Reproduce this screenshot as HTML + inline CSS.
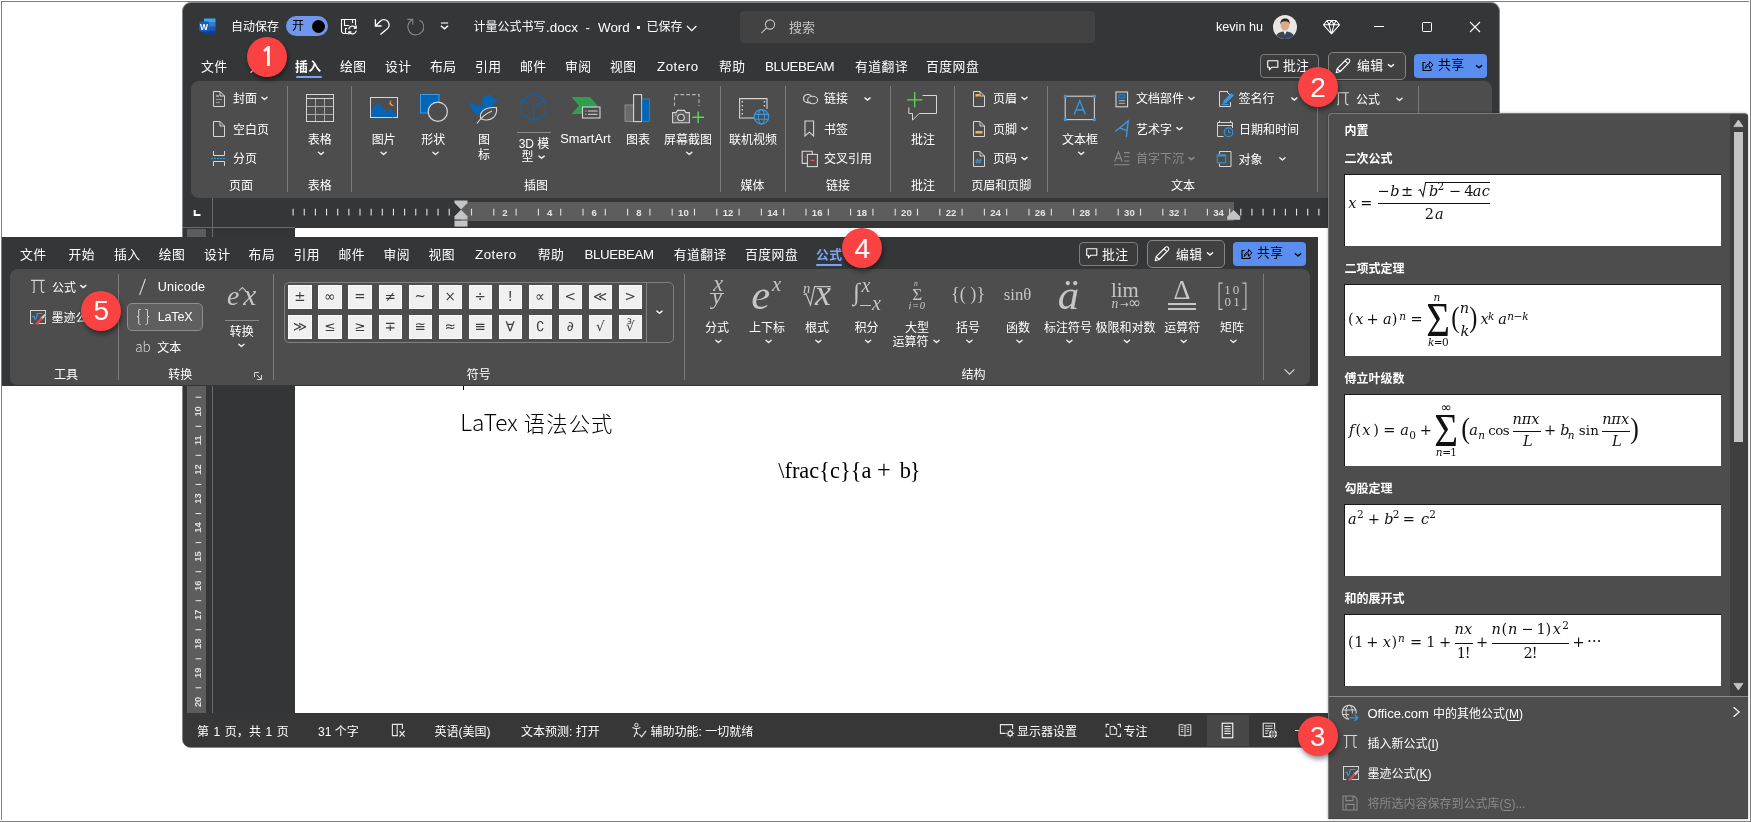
<!DOCTYPE html>
<html lang="zh-CN"><head><meta charset="utf-8"><title>Word 公式</title>
<style>
html,body{margin:0;padding:0;}
body{width:1751px;height:822px;overflow:hidden;background:#fff;position:relative;font-family:"Liberation Sans","Noto Sans CJK SC",sans-serif;font-size:12px;color:#fff;}
#root{position:absolute;left:0;top:0;width:1751px;height:822px;overflow:hidden;will-change:transform;}
#root div,#root span.t,#root svg.i{position:absolute;box-sizing:border-box;}
span.t{white-space:nowrap;}
span.c{text-align:center;}
.b{font-weight:bold;}
.m{font-family:"Liberation Serif","DejaVu Serif",serif;font-style:italic;color:#000;}
.mr{font-family:"Liberation Serif","DejaVu Serif",serif;font-style:normal;color:#000;}
.badge{border-radius:50%;background:#fb4242;box-shadow:1px 3px 5px rgba(0,0,0,.45);color:#fff;text-align:center;font-size:31px;line-height:40px;font-family:"Liberation Sans","Noto Sans CJK SC",sans-serif;}
</style></head><body><div id="root">
<div style="left:1px;top:1px;width:1748px;height:1px;background:#7f7f7f;"></div>
<div style="left:1px;top:1px;width:1px;height:819px;background:#7f7f7f;"></div>
<div style="left:1750px;top:0px;width:1px;height:822px;background:#7f7f7f;"></div>
<div style="left:0px;top:821px;width:1751px;height:1px;background:#7f7f7f;"></div>
<div style="left:182px;top:2px;width:1318px;height:746px;background:#353638;border:1px solid #858585;border-radius:9px;"></div>
<svg class="i" style="left:199px;top:18px;" width="17" height="17" viewBox="0 0 17 17">
<rect x="5" y="0.5" width="11.5" height="4.2" fill="#41a5ee"/>
<rect x="5" y="4.7" width="11.5" height="4.1" fill="#2b7cd3"/>
<rect x="5" y="8.8" width="11.5" height="4.1" fill="#185abd"/>
<rect x="5" y="12.9" width="11.5" height="3.6" fill="#103f91"/>
<rect x="0" y="3.6" width="10" height="10" rx="1" fill="#185abd"/>
<text x="5" y="11.6" font-family="Liberation Sans,sans-serif" font-size="8.5" font-weight="bold" fill="#fff" text-anchor="middle">W</text>
</svg>
<span class="t" style="left:231px;top:18.0px;font-size:12px;line-height:18px;color:#ffffff;">自动保存</span>
<div style="left:286px;top:16px;width:42px;height:20px;background:#6f97ee;border-radius:10px;"></div>
<span class="t" style="left:292px;top:17.0px;font-size:12px;line-height:18px;color:#000;">开</span>
<div style="left:311.5px;top:19.5px;width:13px;height:13px;background:#000;border-radius:50%;"></div>
<svg class="i" style="left:340px;top:18px;" width="18" height="18" viewBox="0 0 18 18">
<path d="M9 15.5 H3.2 L1.5 13.8 V1.5 H15.5 V8" fill="none" stroke="#fff" stroke-width="1.1" stroke-linejoin="miter"/>
<path d="M4.5 1.5 V7.5 H14.5 M12.5 1.5 V5" fill="none" stroke="#fff" stroke-width="1.1"/>
<path d="M5.5 15.5 V10.5 H8" fill="none" stroke="#fff" stroke-width="1.1"/><circle cx="12.5" cy="12" r="5.7" fill="#353638"/>
<path d="M8.6 11.3 A4 4 0 0 1 15.8 9.8 M16.2 7.6 V10.2 H13.6" fill="none" stroke="#fff" stroke-width="1.2"/>
<path d="M16.4 12.7 A4 4 0 0 1 9.2 14.2 M8.8 16.4 V13.8 H11.4" fill="none" stroke="#fff" stroke-width="1.2"/>
</svg>
<svg class="i" style="left:373px;top:17px;" width="18" height="19" viewBox="0 0 18 19">
<path d="M2.4 2.2 V9 H8.6" fill="none" stroke="#fff" stroke-width="1.3" stroke-linejoin="miter"/>
<path d="M2.6 8.8 L7.2 4.2 A5.2 5.2 0 0 1 14.6 11.6 L7.4 17.6" fill="none" stroke="#fff" stroke-width="1.3"/>
</svg>
<svg class="i" style="left:406px;top:17px;" width="18" height="19" viewBox="0 0 18 19">
<path d="M1.3 2.4 H6.8 V7.7" fill="none" stroke="#858585" stroke-width="1.1"/>
<path d="M6.4 2.8 A7.9 7.9 0 1 0 13.4 2.9" fill="none" stroke="#858585" stroke-width="1.1"/>
</svg>
<svg class="i" style="left:440px;top:20px;" width="10" height="12" viewBox="0 0 10 12"><path d="M0.9 3 H8.1" stroke="#fff" stroke-width="1.1"/><path d="M0.9 5.7 L4.5 8.8 L8.1 5.7" fill="none" stroke="#fff" stroke-width="1.5"/></svg>
<span class="t" style="left:473.5px;top:18.2px;font-size:12px;line-height:18px;color:#fff;">计量公式书写</span>
<span class="t" style="left:546px;top:17.5px;font-size:13.4px;line-height:19.4px;color:#fff;">.docx</span>
<span class="t" style="left:585.5px;top:17.5px;font-size:13.4px;line-height:19.4px;color:#fff;">-</span>
<span class="t" style="left:598px;top:17.5px;font-size:13.4px;line-height:19.4px;color:#fff;">Word</span>
<div style="left:637px;top:25.6px;width:3px;height:3px;background:#fff;"></div>
<span class="t" style="left:646.5px;top:18.2px;font-size:12px;line-height:18px;color:#fff;">已保存</span>
<svg class="i" style="left:685px;top:22.5px;" width="14" height="10" viewBox="0 0 14 10"><path d="M2 3 L6.7 7.7 L11.4 3" fill="none" stroke="#fff" stroke-width="1.2"/></svg>
<div style="left:740px;top:11px;width:355px;height:32px;background:#424242;border-radius:4px;"></div>
<svg class="i" style="left:760px;top:18px;" width="17" height="17" viewBox="0 0 17 17"><circle cx="10" cy="6.5" r="4.6" fill="none" stroke="#bdbdbd" stroke-width="1.2"/><path d="M6.7 9.8 L1.5 15" stroke="#bdbdbd" stroke-width="1.2"/></svg>
<span class="t" style="left:789px;top:17.5px;font-size:13px;line-height:19px;color:#c4c4c4;">搜索</span>
<span class="t" style="left:1216px;top:18.099999999999998px;font-size:12.6px;line-height:18.6px;color:#fff;">kevin hu</span>
<svg class="i" style="left:1273px;top:15px;" width="24" height="24" viewBox="0 0 24 24">
<circle cx="12" cy="12" r="12" fill="#e9e6e3"/>
<clipPath id="av"><circle cx="12" cy="12" r="12"/></clipPath>
<g clip-path="url(#av)">
<path d="M2 24 C3 17.5 8 16.5 12 16.5 C16 16.5 21 17.5 22 24 Z" fill="#3b4658"/>
<path d="M10 15 L12 20 L14 15 Z" fill="#f4f4f4"/>
<ellipse cx="12" cy="10.3" rx="4.3" ry="5.4" fill="#d9a98c"/>
<path d="M7.4 9.5 C7 4.5 10 3.2 12.2 3.4 C15 3.4 17.2 5 16.6 9.5 C16 7 14.5 6.2 12 6.4 C9.5 6.2 8 7 7.4 9.5 Z" fill="#2a2422"/>
</g></svg>
<svg class="i" style="left:1322px;top:17.5px;" width="19" height="18" viewBox="0 0 19 18"><path d="M5 2.5 H14 L17.5 6.8 L9.5 15.8 L1.5 6.8 Z M1.5 6.8 H17.5 M5 2.5 L7 6.8 L9.5 15.8 L12 6.8 L14 2.5 M9.5 2.5 L7 6.8 M9.5 2.5 L12 6.8" fill="none" stroke="#fff" stroke-width="1.05" stroke-linejoin="round"/></svg>
<svg class="i" style="left:1373px;top:20px;" width="12" height="12" viewBox="0 0 12 12"><path d="M1 6.5 H11" stroke="#fff" stroke-width="1"/></svg>
<svg class="i" style="left:1421px;top:21px;" width="12" height="12" viewBox="0 0 12 12"><rect x="1.5" y="1.5" width="9" height="9" rx="0.8" fill="none" stroke="#fff" stroke-width="1"/></svg>
<svg class="i" style="left:1469px;top:21px;" width="12" height="12" viewBox="0 0 12 12"><path d="M1 1 L11 11 M11 1 L1 11" stroke="#fff" stroke-width="1.1"/></svg>
<span class="t" style="left:201px;top:57.15px;font-size:12.8px;line-height:19.3px;color:#fff;letter-spacing:0.5px;">文件</span>
<span class="t" style="left:249.5px;top:57.15px;font-size:12.8px;line-height:19.3px;color:#fff;letter-spacing:0.5px;">开始</span>
<span class="t" style="left:295px;top:57.15px;font-size:12.8px;line-height:19.3px;color:#fff;font-weight:bold;letter-spacing:0.5px;">插入</span>
<span class="t" style="left:340px;top:57.15px;font-size:12.8px;line-height:19.3px;color:#fff;letter-spacing:0.5px;">绘图</span>
<span class="t" style="left:385px;top:57.15px;font-size:12.8px;line-height:19.3px;color:#fff;letter-spacing:0.5px;">设计</span>
<span class="t" style="left:430px;top:57.15px;font-size:12.8px;line-height:19.3px;color:#fff;letter-spacing:0.5px;">布局</span>
<span class="t" style="left:475px;top:57.15px;font-size:12.8px;line-height:19.3px;color:#fff;letter-spacing:0.5px;">引用</span>
<span class="t" style="left:520px;top:57.15px;font-size:12.8px;line-height:19.3px;color:#fff;letter-spacing:0.5px;">邮件</span>
<span class="t" style="left:565px;top:57.15px;font-size:12.8px;line-height:19.3px;color:#fff;letter-spacing:0.5px;">审阅</span>
<span class="t" style="left:610px;top:57.15px;font-size:12.8px;line-height:19.3px;color:#fff;letter-spacing:0.5px;">视图</span>
<span class="t" style="left:657px;top:57.15px;font-size:13.3px;line-height:19.3px;color:#fff;letter-spacing:0.55px;">Zotero</span>
<span class="t" style="left:719px;top:57.15px;font-size:12.8px;line-height:19.3px;color:#fff;letter-spacing:0.5px;">帮助</span>
<span class="t" style="left:765px;top:57.15px;font-size:13.3px;line-height:19.3px;color:#fff;letter-spacing:-0.42px;">BLUEBEAM</span>
<span class="t" style="left:855px;top:57.15px;font-size:12.8px;line-height:19.3px;color:#fff;letter-spacing:0.5px;">有道翻译</span>
<span class="t" style="left:926px;top:57.15px;font-size:12.8px;line-height:19.3px;color:#fff;letter-spacing:0.5px;">百度网盘</span>
<div style="left:295.5px;top:75.5px;width:26px;height:2px;background:#7aa3f5;border-radius:1px;"></div>
<div style="left:1259.5px;top:54px;width:59.5px;height:24px;background:#3b3b3b;border:1px solid #7d7d7d;border-radius:4px;"></div>
<svg class="i" style="left:1266px;top:59px;" width="14" height="13" viewBox="0 0 14 13"><path d="M1.7 1.7 H11.8 V8.3 H5.6 L3.4 10.8 V8.3 H1.7 Z" fill="none" stroke="#fff" stroke-width="1.1" stroke-linejoin="round"/></svg>
<span class="t" style="left:1283px;top:56.35px;font-size:12.8px;line-height:19.3px;color:#fff;letter-spacing:0.5px;">批注</span>
<div style="left:1327.5px;top:52px;width:78.5px;height:27.5px;background:#414141;border:1px solid #858585;border-radius:5px;"></div>
<svg class="i" style="left:1334px;top:57px;" width="18" height="18" viewBox="0 0 18 18"><path d="M2.2 15.8 L3.2 11.6 L12.3 2.5 A1.9 1.9 0 0 1 15.2 5.3 L6.2 14.5 Z M3.2 11.6 L6.2 14.5 M11 3.8 L14 6.7" fill="none" stroke="#fff" stroke-width="1.1" stroke-linejoin="round"/></svg>
<span class="t" style="left:1357px;top:56.35px;font-size:12.8px;line-height:19.3px;color:#fff;letter-spacing:0.5px;">编辑</span>
<svg class="i" style="left:1386px;top:62px;" width="11" height="9" viewBox="0 0 11 9"><path d="M2.4 2.6 L5 4.8100000000000005 L7.6 2.6" fill="none" stroke="#fff" stroke-width="1.4" stroke-linecap="round" stroke-linejoin="round" transform="translate(0.00 0.00)"/></svg>
<div style="left:1414px;top:54px;width:72.5px;height:24px;background:#5a8df0;border-radius:4px;"></div>
<svg class="i" style="left:1421px;top:59px;" width="13" height="13" viewBox="0 0 13 13"><path d="M4.5 3.5 H2 V11.5 H10 V9.5" fill="none" stroke="#000" stroke-width="1.1"/><path d="M4.2 9.5 C4.5 6.5 6.3 4.9 8.6 4.9 V2.4 L12 5.9 L8.6 9.2 V6.9 C6.8 6.9 5.3 7.7 4.2 9.5 Z" fill="none" stroke="#000" stroke-width="1" stroke-linejoin="round"/></svg>
<span class="t" style="left:1438px;top:55.15px;font-size:12.8px;line-height:19.3px;color:#000;letter-spacing:0.5px;">共享</span>
<svg class="i" style="left:1474px;top:63px;" width="11" height="9" viewBox="0 0 11 9"><path d="M2.4 2.6 L5 4.8100000000000005 L7.6 2.6" fill="none" stroke="#000" stroke-width="1.4" stroke-linecap="round" stroke-linejoin="round" transform="translate(0.00 0.00)"/></svg>
<div style="left:191px;top:81px;width:1300.5px;height:117px;background:#4d4d4d;border-radius:8px;"></div>
<div style="left:287px;top:86px;width:1px;height:106px;background:#7c7c7c;"></div>
<div style="left:351px;top:86px;width:1px;height:106px;background:#7c7c7c;"></div>
<div style="left:720px;top:86px;width:1px;height:106px;background:#7c7c7c;"></div>
<div style="left:785px;top:86px;width:1px;height:106px;background:#7c7c7c;"></div>
<div style="left:890px;top:86px;width:1px;height:106px;background:#7c7c7c;"></div>
<div style="left:954px;top:86px;width:1px;height:106px;background:#7c7c7c;"></div>
<div style="left:1047px;top:86px;width:1px;height:106px;background:#7c7c7c;"></div>
<div style="left:1317px;top:86px;width:1px;height:106px;background:#7c7c7c;"></div>
<div style="left:1418px;top:86px;width:1px;height:106px;background:#7c7c7c;"></div>
<svg class="i" style="left:212px;top:90px;" width="14" height="18" viewBox="0 0 14 18"><path d="M1.5 1.5 H8 L12.5 6 V16.5 H1.5 Z M8 1.5 V6 H12.5" fill="none" stroke="#d6d6d6" stroke-width="1" stroke-linejoin="miter"/><rect x="4" y="5" width="3" height="2" fill="#9a9a9a"/><path d="M4 9.5 H10 M4 12.5 H8" stroke="#9a9a9a" stroke-width="1"/></svg>
<span class="t" style="left:233px;top:90.2px;font-size:12px;line-height:18px;color:#fff;">封面</span>
<svg class="i" style="left:259px;top:94px;" width="11" height="9" viewBox="0 0 11 9"><path d="M2.4 2.6 L5 4.8100000000000005 L7.6 2.6" fill="none" stroke="#f0f0f0" stroke-width="1.4" stroke-linecap="round" stroke-linejoin="round" transform="translate(0.50 0.70)"/></svg>
<svg class="i" style="left:212px;top:120px;" width="14" height="18" viewBox="0 0 14 18"><path d="M1.5 1.5 H8 L12.5 6 V16.5 H1.5 Z M8 1.5 V6 H12.5" fill="none" stroke="#d6d6d6" stroke-width="1" stroke-linejoin="miter"/></svg>
<span class="t" style="left:233px;top:120.79999999999998px;font-size:12px;line-height:18px;color:#fff;">空白页</span>
<svg class="i" style="left:211px;top:150px;" width="16" height="17" viewBox="0 0 16 17"><path d="M2.5 1 V5.5 H13.5 V1 M2.5 16 V11.5 H13.5 V16" fill="none" stroke="#d6d6d6" stroke-width="1"/><path d="M0 8.5 H15.5" stroke="#3a96dd" stroke-width="1" stroke-dasharray="2 1"/></svg>
<span class="t" style="left:233px;top:150.39999999999998px;font-size:12px;line-height:18px;color:#fff;">分页</span>
<span class="t c" style="left:181.0px;top:177.39999999999998px;width:120px;font-size:12px;line-height:18px;color:#fff;">页面</span>
<svg class="i" style="left:305px;top:93px;" width="30" height="30" viewBox="0 0 30 30"><rect x="1.5" y="1.5" width="27" height="27" fill="none" stroke="#d6d6d6" stroke-width="1"/><path d="M1.5 5.5 H28.5" stroke="#d6d6d6" stroke-width="1"/><path d="M2 13.5 H28 M2 21.5 H28 M10.5 6 V28 M19.5 6 V28" stroke="#a8a8a8" stroke-width="1"/></svg>
<span class="t c" style="left:259.7px;top:130.79999999999998px;width:120px;font-size:12px;line-height:18px;color:#fff;">表格</span>
<svg class="i" style="left:316px;top:149px;" width="11" height="9" viewBox="0 0 11 9"><path d="M2.4 2.6 L5 4.8100000000000005 L7.6 2.6" fill="none" stroke="#f0f0f0" stroke-width="1.4" stroke-linecap="round" stroke-linejoin="round" transform="translate(0.00 0.60)"/></svg>
<span class="t c" style="left:259.7px;top:177.39999999999998px;width:120px;font-size:12px;line-height:18px;color:#fff;">表格</span>
<svg class="i" style="left:369px;top:96px;" width="30" height="23" viewBox="0 0 30 23"><rect x="1.5" y="1.5" width="27" height="20" fill="none" stroke="#d6d6d6" stroke-width="1"/><path d="M2 21 V14.5 L9 6.5 L18 16 L21.5 12.5 L28 19.5 V21 Z" fill="#0566b8"/><path d="M18 16 L23.5 21.4" stroke="#4d4d4d" stroke-width="1"/><path d="M23.2 4 A3 3 0 1 0 26 8.6 A2.6 2.6 0 0 1 23.2 4 Z" fill="#f2a33c"/></svg>
<span class="t c" style="left:323.7px;top:130.79999999999998px;width:120px;font-size:12px;line-height:18px;color:#fff;">图片</span>
<svg class="i" style="left:378px;top:149px;" width="11" height="9" viewBox="0 0 11 9"><path d="M2.4 2.6 L5 4.8100000000000005 L7.6 2.6" fill="none" stroke="#f0f0f0" stroke-width="1.4" stroke-linecap="round" stroke-linejoin="round" transform="translate(0.60 0.60)"/></svg>
<svg class="i" style="left:419px;top:93px;" width="32" height="30" viewBox="0 0 32 30"><rect x="1.5" y="1.5" width="18.5" height="18.5" fill="#0566b8" stroke="#3f9be3" stroke-width="1"/><circle cx="18.8" cy="18.7" r="9.6" fill="#4d4d4d" stroke="#d6d6d6" stroke-width="1.2"/></svg>
<span class="t c" style="left:373.3px;top:130.79999999999998px;width:120px;font-size:12px;line-height:18px;color:#fff;">形状</span>
<svg class="i" style="left:430px;top:149px;" width="11" height="9" viewBox="0 0 11 9"><path d="M2.4 2.6 L5 4.8100000000000005 L7.6 2.6" fill="none" stroke="#f0f0f0" stroke-width="1.4" stroke-linecap="round" stroke-linejoin="round" transform="translate(0.50 0.60)"/></svg>
<svg class="i" style="left:469px;top:93px;" width="31" height="32" viewBox="0 0 31 32"><path d="M14 12 C12.5 9 12.8 3.5 17.5 2 C21.5 1 24 3.5 24.6 6 L29 6.6 C28 9.5 25.5 10.6 23.5 11 C24.5 12.5 25 14 25 15 C20 13.5 14 16 11.5 22 C3 21.5 0.5 13 1.2 8.5 C4 12 9.5 13.5 14 12 Z" fill="#0566b8"/>
<path d="M12 26 C9.5 19.5 15 13.8 27.5 14.6 C28.5 23 22.5 29.5 12 26 Z" fill="#4d4d4d" stroke="#d6d6d6" stroke-width="1.1"/><path d="M8 30.5 C12 24.5 17 20.5 23 18" fill="none" stroke="#d6d6d6" stroke-width="1.1"/></svg>
<span class="t c" style="left:424.0px;top:130.6px;width:120px;font-size:12px;line-height:18px;color:#fff;">图</span>
<span class="t c" style="left:424.0px;top:145.79999999999998px;width:120px;font-size:12px;line-height:18px;color:#fff;">标</span>
<svg class="i" style="left:519px;top:92px;" width="30" height="30" viewBox="0 0 30 30"><path d="M14.5 1.6 L26.6 8.2 V22 L14.5 28.8 L2.4 22 V8.2 Z M2.4 8.2 L9.6 12.2 M14.5 15 L26.6 8.2 M14.5 15 V28.8" fill="none" stroke="#0566b8" stroke-width="1.15" stroke-linejoin="round"/></svg>
<div style="left:517px;top:132px;width:34px;height:1px;background:#8a8a8a;"></div>
<span class="t c" style="left:474.0px;top:135.0px;width:120px;font-size:12px;line-height:18px;color:#fff;">3D 模</span>
<span class="t" style="left:521.5px;top:148.0px;font-size:12px;line-height:18px;color:#ffffff;">型</span>
<svg class="i" style="left:536px;top:153px;" width="11" height="9" viewBox="0 0 11 9"><path d="M2.4 2.6 L5 4.8100000000000005 L7.6 2.6" fill="none" stroke="#f0f0f0" stroke-width="1.4" stroke-linecap="round" stroke-linejoin="round" transform="translate(0.60 0.50)"/></svg>
<svg class="i" style="left:570px;top:95px;" width="32" height="25" viewBox="0 0 32 25"><path d="M1.5 2 H20 L27.5 10.5 L20 19 H1.5 L9 10.5 Z" fill="#2f9e4f"/><rect x="12.5" y="12" width="17.5" height="11" fill="#4d4d4d" stroke="#d6d6d6" stroke-width="1.1"/><path d="M15.3 16 H16.5 M18 16 H27.5 M15.3 19.3 H16.5 M18 19.3 H27.5" stroke="#d6d6d6" stroke-width="1"/></svg>
<span class="t c" style="left:525.5px;top:130.2px;width:120px;font-size:12.8px;line-height:18.8px;color:#fff;">SmartArt</span>
<svg class="i" style="left:624px;top:93px;" width="27" height="30" viewBox="0 0 27 30"><rect x="1" y="12" width="8.5" height="16.5" fill="#6a6a6a" stroke="#9a9a9a" stroke-width="0.8"/><rect x="9.6" y="1.6" width="8" height="27" fill="#4d4d4d" stroke="#d6d6d6" stroke-width="1.1"/><rect x="18" y="6" width="7.6" height="22.6" fill="#0566b8" stroke="#3a96dd" stroke-width="0.6"/></svg>
<span class="t c" style="left:578.0px;top:130.79999999999998px;width:120px;font-size:12px;line-height:18px;color:#fff;">图表</span>
<svg class="i" style="left:671px;top:93px;" width="34" height="32" viewBox="0 0 34 32"><path d="M3.5 13 V1.6 H28 V13" fill="none" stroke="#b5b5b5" stroke-width="1.1" stroke-dasharray="3.6 2.2"/><path d="M1.6 29.8 V19.6 H5 L6.6 17.4 H13.4 L15 19.6 H18.4 V29.8 Z" fill="#5e5e5e" stroke="#d6d6d6" stroke-width="1.1"/><circle cx="10" cy="24.5" r="3.3" fill="#4d4d4d" stroke="#d6d6d6" stroke-width="1.1"/><path d="M4 22 H5.5" stroke="#d6d6d6" stroke-width="1"/><path d="M27.2 18.5 V30 M21.4 24.2 H33" stroke="#5fd45f" stroke-width="1.4"/></svg>
<span class="t c" style="left:628.0px;top:130.79999999999998px;width:120px;font-size:12px;line-height:18px;color:#fff;">屏幕截图</span>
<svg class="i" style="left:684px;top:149px;" width="11" height="9" viewBox="0 0 11 9"><path d="M2.4 2.6 L5 4.8100000000000005 L7.6 2.6" fill="none" stroke="#f0f0f0" stroke-width="1.4" stroke-linecap="round" stroke-linejoin="round" transform="translate(0.30 0.60)"/></svg>
<span class="t c" style="left:476.0px;top:177.39999999999998px;width:120px;font-size:12px;line-height:18px;color:#fff;">插图</span>
<svg class="i" style="left:738px;top:97px;" width="32" height="29" viewBox="0 0 32 29"><path d="M18 21 H1.6 V1.6 H29 V12" fill="none" stroke="#d6d6d6" stroke-width="1.1"/><path d="M4.3 4 V5.5 M4.3 8 V9.5 M4.3 12 V13.5 M4.3 16 V17.5 M26.4 4 V5.5 M26.4 8 V9.5" stroke="#d6d6d6" stroke-width="1.4"/><circle cx="23.5" cy="19.8" r="7.2" fill="#4d4d4d" stroke="#3a96dd" stroke-width="1.3"/><ellipse cx="23.5" cy="19.8" rx="3.1" ry="7.2" fill="none" stroke="#3a96dd" stroke-width="1.1"/><path d="M16.5 17.4 H30.5 M16.5 22.2 H30.5" stroke="#3a96dd" stroke-width="1.1"/></svg>
<span class="t c" style="left:693.0px;top:130.79999999999998px;width:120px;font-size:12px;line-height:18px;color:#fff;">联机视频</span>
<span class="t c" style="left:692.6px;top:177.39999999999998px;width:120px;font-size:12px;line-height:18px;color:#fff;">媒体</span>
<svg class="i" style="left:801px;top:93px;" width="18" height="12" viewBox="0 0 18 12"><path d="M9.5 8.8 A3.8 3.8 0 0 1 5.2 9.2 A3.9 3.9 0 0 1 5.2 1.8 C7 1 9 1.6 10.2 3" fill="none" stroke="#d6d6d6" stroke-width="1.1"/><ellipse cx="11.6" cy="7" rx="5" ry="3.8" fill="none" stroke="#d6d6d6" stroke-width="1.1"/></svg>
<span class="t" style="left:824px;top:90.2px;font-size:12px;line-height:18px;color:#fff;">链接</span>
<svg class="i" style="left:862px;top:95px;" width="11" height="9" viewBox="0 0 11 9"><path d="M2.4 2.6 L5 4.8100000000000005 L7.6 2.6" fill="none" stroke="#f0f0f0" stroke-width="1.4" stroke-linecap="round" stroke-linejoin="round" transform="translate(0.50 0.30)"/></svg>
<svg class="i" style="left:804px;top:120px;" width="11" height="18" viewBox="0 0 11 18"><path d="M1 1 H9.6 V16 L5.3 12.2 L1 16 Z" fill="none" stroke="#d6d6d6" stroke-width="1.1"/></svg>
<span class="t" style="left:824px;top:120.79999999999998px;font-size:12px;line-height:18px;color:#fff;">书签</span>
<svg class="i" style="left:801px;top:150px;" width="18" height="18" viewBox="0 0 18 18"><path d="M6 13.4 H1.2 V1.2 H11.2 V4" fill="none" stroke="#d6d6d6" stroke-width="1.1"/><rect x="6.4" y="4.4" width="10" height="12.2" fill="#4d4d4d" stroke="#d6d6d6" stroke-width="1.1"/><path d="M3.6 7 H5.4 M9.4 10.4 H13.2" stroke="#ff4b4b" stroke-width="1.2"/></svg>
<span class="t" style="left:824px;top:150.39999999999998px;font-size:12px;line-height:18px;color:#fff;">交叉引用</span>
<span class="t c" style="left:778.0px;top:177.39999999999998px;width:120px;font-size:12px;line-height:18px;color:#fff;">链接</span>
<svg class="i" style="left:905px;top:90px;" width="34" height="33" viewBox="0 0 34 33"><path d="M17.5 5.5 H31.5 V23.5 H14.2 L7.5 30.2 V23.5 H3.8 V17.5" fill="none" stroke="#d6d6d6" stroke-width="1"/><path d="M9.7 2 V17.4 M2 9.8 H17.4" stroke="#5fd45f" stroke-width="1.3"/></svg>
<span class="t c" style="left:863.0px;top:130.79999999999998px;width:120px;font-size:12px;line-height:18px;color:#fff;">批注</span>
<span class="t c" style="left:863.0px;top:177.39999999999998px;width:120px;font-size:12px;line-height:18px;color:#fff;">批注</span>
<svg class="i" style="left:972px;top:90px;" width="14" height="18" viewBox="0 0 14 18"><path d="M1.5 1.5 H8 L12.5 6 V16.5 H1.5 Z M8 1.5 V6 H12.5" fill="none" stroke="#d6d6d6" stroke-width="1" stroke-linejoin="miter"/><rect x="3.5" y="4" width="4" height="2.5" fill="#f5b33f"/></svg>
<span class="t" style="left:993px;top:90.2px;font-size:12px;line-height:18px;color:#fff;">页眉</span>
<svg class="i" style="left:1019px;top:94px;" width="11" height="9" viewBox="0 0 11 9"><path d="M2.4 2.6 L5 4.8100000000000005 L7.6 2.6" fill="none" stroke="#f0f0f0" stroke-width="1.4" stroke-linecap="round" stroke-linejoin="round" transform="translate(0.50 0.70)"/></svg>
<svg class="i" style="left:972px;top:120px;" width="14" height="18" viewBox="0 0 14 18"><path d="M1.5 1.5 H8 L12.5 6 V16.5 H1.5 Z M8 1.5 V6 H12.5" fill="none" stroke="#d6d6d6" stroke-width="1" stroke-linejoin="miter"/><rect x="3.5" y="11" width="7" height="2.5" fill="#f5b33f"/></svg>
<span class="t" style="left:993px;top:120.79999999999998px;font-size:12px;line-height:18px;color:#fff;">页脚</span>
<svg class="i" style="left:1019px;top:125px;" width="11" height="9" viewBox="0 0 11 9"><path d="M2.4 2.6 L5 4.8100000000000005 L7.6 2.6" fill="none" stroke="#f0f0f0" stroke-width="1.4" stroke-linecap="round" stroke-linejoin="round" transform="translate(0.50 0.00)"/></svg>
<svg class="i" style="left:972px;top:150px;" width="14" height="18" viewBox="0 0 14 18"><path d="M1.5 1.5 H8 L12.5 6 V16.5 H1.5 Z M8 1.5 V6 H12.5" fill="none" stroke="#d6d6d6" stroke-width="1" stroke-linejoin="miter"/><path d="M5.5 8.6 L4.7 13.6 M8.3 8.6 L7.5 13.6 M3.6 10.2 H9.6 M3.3 12 H9.3" stroke="#3a96dd" stroke-width="1"/></svg>
<span class="t" style="left:993px;top:150.39999999999998px;font-size:12px;line-height:18px;color:#fff;">页码</span>
<svg class="i" style="left:1019px;top:154px;" width="11" height="9" viewBox="0 0 11 9"><path d="M2.4 2.6 L5 4.8100000000000005 L7.6 2.6" fill="none" stroke="#f0f0f0" stroke-width="1.4" stroke-linecap="round" stroke-linejoin="round" transform="translate(0.50 0.80)"/></svg>
<span class="t c" style="left:941.2px;top:177.39999999999998px;width:120px;font-size:12px;line-height:18px;color:#fff;">页眉和页脚</span>
<svg class="i" style="left:1063px;top:94px;" width="34" height="28" viewBox="0 0 34 28"><rect x="2.2" y="2.2" width="29.2" height="23.4" fill="none" stroke="#cfcfcf" stroke-width="1.1"/><g fill="#3a96dd"><rect x="0.8" y="0.8" width="3" height="3"/><rect x="29.8" y="0.8" width="3" height="3"/><rect x="0.8" y="24" width="3" height="3"/><rect x="29.8" y="24" width="3" height="3"/></g><path d="M11.2 20.6 L16.8 6.8 L22.4 20.6 M13.2 16 H20.4" fill="none" stroke="#3a96dd" stroke-width="1.4"/></svg>
<span class="t c" style="left:1020.0px;top:130.79999999999998px;width:120px;font-size:12px;line-height:18px;color:#fff;">文本框</span>
<svg class="i" style="left:1076px;top:149px;" width="11" height="9" viewBox="0 0 11 9"><path d="M2.4 2.6 L5 4.8100000000000005 L7.6 2.6" fill="none" stroke="#f0f0f0" stroke-width="1.4" stroke-linecap="round" stroke-linejoin="round" transform="translate(0.20 0.60)"/></svg>
<svg class="i" style="left:1115px;top:90.5px;" width="14" height="17" viewBox="0 0 14 17"><rect x="1" y="1" width="11.6" height="14.8" fill="none" stroke="#d6d6d6" stroke-width="1.1"/><rect x="3.8" y="3.8" width="6" height="3.2" fill="#0566b8" stroke="#3a96dd" stroke-width="0.6"/><path d="M3.8 9.6 H9.8 M3.8 12.4 H9.8" stroke="#a0a0a0" stroke-width="1.2"/></svg>
<span class="t" style="left:1136px;top:90.2px;font-size:12px;line-height:18px;color:#fff;">文档部件</span>
<svg class="i" style="left:1186px;top:94px;" width="11" height="9" viewBox="0 0 11 9"><path d="M2.4 2.6 L5 4.8100000000000005 L7.6 2.6" fill="none" stroke="#f0f0f0" stroke-width="1.4" stroke-linecap="round" stroke-linejoin="round" transform="translate(0.40 0.70)"/></svg>
<svg class="i" style="left:1114px;top:119px;" width="17" height="19" viewBox="0 0 17 19"><path d="M1.8 12 L14.2 2 L12.4 17.4 M5.6 9 L13.2 11.6" fill="none" stroke="#3a96dd" stroke-width="1.5" stroke-linecap="round"/></svg>
<span class="t" style="left:1136px;top:120.79999999999998px;font-size:12px;line-height:18px;color:#fff;">艺术字</span>
<svg class="i" style="left:1174px;top:125px;" width="11" height="9" viewBox="0 0 11 9"><path d="M2.4 2.6 L5 4.8100000000000005 L7.6 2.6" fill="none" stroke="#f0f0f0" stroke-width="1.4" stroke-linecap="round" stroke-linejoin="round" transform="translate(0.50 0.00)"/></svg>
<svg class="i" style="left:1113px;top:150px;" width="18" height="17" viewBox="0 0 18 17"><path d="M1.6 11.6 L5.4 1.8 L9.2 11.6 M3 8.2 H7.8" fill="none" stroke="#8c8c8c" stroke-width="1.1"/><path d="M11.2 2.6 H16.6 M11.2 6.8 H16.6 M11.2 11 H16.6 M1 14.8 H16.6" stroke="#8c8c8c" stroke-width="1.1"/></svg>
<span class="t" style="left:1136px;top:150.39999999999998px;font-size:12px;line-height:18px;color:#8c8c8c;">首字下沉</span>
<svg class="i" style="left:1186px;top:154px;" width="11" height="9" viewBox="0 0 11 9"><path d="M2.4 2.6 L5 4.8100000000000005 L7.6 2.6" fill="none" stroke="#8c8c8c" stroke-width="1.4" stroke-linecap="round" stroke-linejoin="round" transform="translate(0.40 0.80)"/></svg>
<svg class="i" style="left:1217px;top:89px;" width="18" height="19" viewBox="0 0 18 19"><path d="M11 2.5 H2.5 V17.5 H13.5 V13 M9.5 2.5 L13.5 6.5" fill="none" stroke="#d6d6d6" stroke-width="1"/><path d="M6.2 14.6 L7 11.6 L14.4 4.2 L16.6 6.4 L9.2 13.8 Z" fill="#3a96dd" stroke="#3a96dd" stroke-width="0.6" stroke-linejoin="round"/><path d="M4.4 15.5 H11.6" stroke="#3a96dd" stroke-width="1"/></svg>
<span class="t" style="left:1238.5px;top:90.4px;font-size:12px;line-height:18px;color:#fff;">签名行</span>
<svg class="i" style="left:1289px;top:95px;" width="11" height="9" viewBox="0 0 11 9"><path d="M2.4 2.6 L5 4.8100000000000005 L7.6 2.6" fill="none" stroke="#f0f0f0" stroke-width="1.4" stroke-linecap="round" stroke-linejoin="round" transform="translate(0.30 0.30)"/></svg>
<svg class="i" style="left:1216px;top:120px;" width="19" height="18" viewBox="0 0 19 18"><path d="M7.5 16.5 H1.5 V2.5 H16.5 V8" fill="none" stroke="#d6d6d6" stroke-width="1"/><path d="M1.5 5.5 H16.5 M3.5 0.6 V2.5 M14.5 0.6 V2.5" stroke="#d6d6d6" stroke-width="1"/><circle cx="12.5" cy="12.2" r="4.3" fill="#4d4d4d" stroke="#3a96dd" stroke-width="1.1"/><path d="M12.5 9.8 V12.4 H14.6" fill="none" stroke="#3a96dd" stroke-width="1"/></svg>
<span class="t" style="left:1239px;top:120.69999999999999px;font-size:12px;line-height:18px;color:#fff;">日期和时间</span>
<svg class="i" style="left:1216px;top:150px;" width="17" height="18" viewBox="0 0 17 18"><path d="M3.5 4 V1.5 H15 V16.5 H3.5 V13.6" fill="none" stroke="#d6d6d6" stroke-width="1"/><rect x="1.3" y="4.8" width="8.4" height="8" fill="#4d4d4d" stroke="#3a96dd" stroke-width="1"/><path d="M1.3 5.8 H9.7" stroke="#3a96dd" stroke-width="1.4"/></svg>
<span class="t" style="left:1238.5px;top:151.0px;font-size:12px;line-height:18px;color:#fff;">对象</span>
<svg class="i" style="left:1277px;top:155px;" width="11" height="9" viewBox="0 0 11 9"><path d="M2.4 2.6 L5 4.8100000000000005 L7.6 2.6" fill="none" stroke="#f0f0f0" stroke-width="1.4" stroke-linecap="round" stroke-linejoin="round" transform="translate(0.40 0.20)"/></svg>
<span class="t c" style="left:1123.0px;top:177.39999999999998px;width:120px;font-size:12px;line-height:18px;color:#fff;">文本</span>
<svg class="i" style="left:1334px;top:92px;" width="17" height="15" viewBox="0 0 17 15"><g transform="translate(1.40 0.20)"><path d="M0 0.5 H13.6 M3 0.5 V12.6 M1.6 12.6 H3 M10.3 0.5 V10.4 Q10.3 12.7 13.3 12.5" fill="none" stroke="#d6d6d6" stroke-width="1.1"/></g></svg>
<span class="t" style="left:1356px;top:90.5px;font-size:12px;line-height:18px;color:#fff;">公式</span>
<svg class="i" style="left:1394px;top:95px;" width="11" height="9" viewBox="0 0 11 9"><path d="M2.4 2.6 L5 4.8100000000000005 L7.6 2.6" fill="none" stroke="#f0f0f0" stroke-width="1.4" stroke-linecap="round" stroke-linejoin="round" transform="translate(0.50 0.70)"/></svg>
<div style="left:212px;top:198px;width:1px;height:515px;background:#6b6b6b;"></div>
<div style="left:183px;top:227px;width:112px;height:1px;background:#6b6b6b;"></div>
<svg class="i" style="left:193px;top:209px;" width="9" height="9" viewBox="0 0 9 9"><path d="M1.7 1 V6.1 H7.5" fill="none" stroke="#fff" stroke-width="2"/></svg>
<div style="left:461px;top:202px;width:773px;height:18.5px;background:#5d5d5d;"></div>
<svg class="i" style="left:0;top:0" width="1330" height="230" viewBox="0 0 1330 230"><rect x="448.65" y="208.7" width="1.1" height="6.8" fill="#e0e0e0"/><rect x="437.50" y="208.7" width="1.1" height="6.8" fill="#e0e0e0"/><rect x="426.35" y="208.7" width="1.1" height="6.8" fill="#e0e0e0"/><rect x="415.20" y="208.7" width="1.1" height="6.8" fill="#e0e0e0"/><rect x="404.05" y="208.7" width="1.1" height="6.8" fill="#e0e0e0"/><rect x="392.90" y="208.7" width="1.1" height="6.8" fill="#e0e0e0"/><rect x="381.75" y="208.7" width="1.1" height="6.8" fill="#e0e0e0"/><rect x="370.60" y="208.7" width="1.1" height="6.8" fill="#e0e0e0"/><rect x="359.45" y="208.7" width="1.1" height="6.8" fill="#e0e0e0"/><rect x="348.30" y="208.7" width="1.1" height="6.8" fill="#e0e0e0"/><rect x="337.15" y="208.7" width="1.1" height="6.8" fill="#e0e0e0"/><rect x="326.00" y="208.7" width="1.1" height="6.8" fill="#e0e0e0"/><rect x="314.85" y="208.7" width="1.1" height="6.8" fill="#e0e0e0"/><rect x="303.70" y="208.7" width="1.1" height="6.8" fill="#e0e0e0"/><rect x="292.55" y="208.7" width="1.1" height="6.8" fill="#e0e0e0"/><rect x="470.95" y="208.7" width="1.1" height="6.8" fill="#e0e0e0"/><rect x="493.25" y="208.7" width="1.1" height="6.8" fill="#e0e0e0"/><rect x="515.55" y="208.7" width="1.1" height="6.8" fill="#e0e0e0"/><rect x="537.85" y="208.7" width="1.1" height="6.8" fill="#e0e0e0"/><rect x="560.15" y="208.7" width="1.1" height="6.8" fill="#e0e0e0"/><rect x="582.45" y="208.7" width="1.1" height="6.8" fill="#e0e0e0"/><rect x="604.75" y="208.7" width="1.1" height="6.8" fill="#e0e0e0"/><rect x="627.05" y="208.7" width="1.1" height="6.8" fill="#e0e0e0"/><rect x="649.35" y="208.7" width="1.1" height="6.8" fill="#e0e0e0"/><rect x="671.65" y="208.7" width="1.1" height="6.8" fill="#e0e0e0"/><rect x="693.95" y="208.7" width="1.1" height="6.8" fill="#e0e0e0"/><rect x="716.25" y="208.7" width="1.1" height="6.8" fill="#e0e0e0"/><rect x="738.55" y="208.7" width="1.1" height="6.8" fill="#e0e0e0"/><rect x="760.85" y="208.7" width="1.1" height="6.8" fill="#e0e0e0"/><rect x="783.15" y="208.7" width="1.1" height="6.8" fill="#e0e0e0"/><rect x="805.45" y="208.7" width="1.1" height="6.8" fill="#e0e0e0"/><rect x="827.75" y="208.7" width="1.1" height="6.8" fill="#e0e0e0"/><rect x="850.05" y="208.7" width="1.1" height="6.8" fill="#e0e0e0"/><rect x="872.35" y="208.7" width="1.1" height="6.8" fill="#e0e0e0"/><rect x="894.65" y="208.7" width="1.1" height="6.8" fill="#e0e0e0"/><rect x="916.95" y="208.7" width="1.1" height="6.8" fill="#e0e0e0"/><rect x="939.25" y="208.7" width="1.1" height="6.8" fill="#e0e0e0"/><rect x="961.55" y="208.7" width="1.1" height="6.8" fill="#e0e0e0"/><rect x="983.85" y="208.7" width="1.1" height="6.8" fill="#e0e0e0"/><rect x="1006.15" y="208.7" width="1.1" height="6.8" fill="#e0e0e0"/><rect x="1028.45" y="208.7" width="1.1" height="6.8" fill="#e0e0e0"/><rect x="1050.75" y="208.7" width="1.1" height="6.8" fill="#e0e0e0"/><rect x="1073.05" y="208.7" width="1.1" height="6.8" fill="#e0e0e0"/><rect x="1095.35" y="208.7" width="1.1" height="6.8" fill="#e0e0e0"/><rect x="1117.65" y="208.7" width="1.1" height="6.8" fill="#e0e0e0"/><rect x="1139.95" y="208.7" width="1.1" height="6.8" fill="#e0e0e0"/><rect x="1162.25" y="208.7" width="1.1" height="6.8" fill="#e0e0e0"/><rect x="1184.55" y="208.7" width="1.1" height="6.8" fill="#e0e0e0"/><rect x="1206.85" y="208.7" width="1.1" height="6.8" fill="#e0e0e0"/><rect x="1229.15" y="208.7" width="1.1" height="6.8" fill="#e0e0e0"/><rect x="1240.25" y="208.7" width="1.1" height="6.8" fill="#e0e0e0"/><rect x="1251.40" y="208.7" width="1.1" height="6.8" fill="#e0e0e0"/><rect x="1262.55" y="208.7" width="1.1" height="6.8" fill="#e0e0e0"/><rect x="1273.70" y="208.7" width="1.1" height="6.8" fill="#e0e0e0"/><rect x="1284.85" y="208.7" width="1.1" height="6.8" fill="#e0e0e0"/><rect x="1296.00" y="208.7" width="1.1" height="6.8" fill="#e0e0e0"/><rect x="1307.15" y="208.7" width="1.1" height="6.8" fill="#e0e0e0"/><rect x="1318.30" y="208.7" width="1.1" height="6.8" fill="#e0e0e0"/><g font-family="Liberation Sans,sans-serif" font-size="9.6" font-weight="bold" fill="#e4e4e4"><text x="505.0" y="216" text-anchor="middle">2</text><text x="549.6" y="216" text-anchor="middle">4</text><text x="594.2" y="216" text-anchor="middle">6</text><text x="638.8" y="216" text-anchor="middle">8</text><text x="683.4" y="216" text-anchor="middle">10</text><text x="728.0" y="216" text-anchor="middle">12</text><text x="772.6" y="216" text-anchor="middle">14</text><text x="817.2" y="216" text-anchor="middle">16</text><text x="861.8" y="216" text-anchor="middle">18</text><text x="906.4" y="216" text-anchor="middle">20</text><text x="951.0" y="216" text-anchor="middle">22</text><text x="995.6" y="216" text-anchor="middle">24</text><text x="1040.2" y="216" text-anchor="middle">26</text><text x="1084.8" y="216" text-anchor="middle">28</text><text x="1129.4" y="216" text-anchor="middle">30</text><text x="1174.0" y="216" text-anchor="middle">32</text><text x="1218.6" y="216" text-anchor="middle">34</text></g><g fill="#c4c4c4"><path d="M454.5 200.5 H467.5 V203 L461 209.5 L454.5 203 Z"/><path d="M461 209.8 L467.5 216.3 V219.6 H454.5 V216.3 Z"/><rect x="454.5" y="220.6" width="13" height="6"/><path d="M1233.7 210 L1240.2 216.5 V219.8 H1227.2 V216.5 Z"/></g></svg>
<div style="left:183px;top:228px;width:112px;height:485px;background:#343536;"></div>
<div style="left:294.5px;top:228px;width:1036px;height:485px;background:#fff;"></div>
<div style="left:212px;top:228px;width:1px;height:485px;background:#6b6b6b;"></div>
<div style="left:187px;top:228.5px;width:19px;height:484.5px;background:#5d5d5d;"></div>
<svg class="i" style="left:0;top:0" width="230" height="713" viewBox="0 0 230 713"><g font-family="Liberation Sans,sans-serif" font-size="9.4" font-weight="bold" fill="#e0e0e0"><rect x="195.6" y="251.5" width="5.6" height="1.1" fill="#e0e0e0"/><text transform="translate(200.9 266.1) rotate(-90)" text-anchor="middle">5</text><rect x="195.6" y="280.5" width="5.6" height="1.1" fill="#e0e0e0"/><text transform="translate(200.9 295.2) rotate(-90)" text-anchor="middle">6</text><rect x="195.6" y="309.6" width="5.6" height="1.1" fill="#e0e0e0"/><text transform="translate(200.9 324.2) rotate(-90)" text-anchor="middle">7</text><rect x="195.6" y="338.6" width="5.6" height="1.1" fill="#e0e0e0"/><text transform="translate(200.9 353.3) rotate(-90)" text-anchor="middle">8</text><rect x="195.6" y="367.7" width="5.6" height="1.1" fill="#e0e0e0"/><text transform="translate(200.9 382.3) rotate(-90)" text-anchor="middle">9</text><rect x="195.6" y="396.7" width="5.6" height="1.1" fill="#e0e0e0"/><text transform="translate(200.9 411.4) rotate(-90)" text-anchor="middle">10</text><rect x="195.6" y="425.8" width="5.6" height="1.1" fill="#e0e0e0"/><text transform="translate(200.9 440.4) rotate(-90)" text-anchor="middle">11</text><rect x="195.6" y="454.8" width="5.6" height="1.1" fill="#e0e0e0"/><text transform="translate(200.9 469.5) rotate(-90)" text-anchor="middle">12</text><rect x="195.6" y="483.9" width="5.6" height="1.1" fill="#e0e0e0"/><text transform="translate(200.9 498.5) rotate(-90)" text-anchor="middle">13</text><rect x="195.6" y="513.0" width="5.6" height="1.1" fill="#e0e0e0"/><text transform="translate(200.9 527.6) rotate(-90)" text-anchor="middle">14</text><rect x="195.6" y="542.0" width="5.6" height="1.1" fill="#e0e0e0"/><text transform="translate(200.9 556.6) rotate(-90)" text-anchor="middle">15</text><rect x="195.6" y="571.1" width="5.6" height="1.1" fill="#e0e0e0"/><text transform="translate(200.9 585.7) rotate(-90)" text-anchor="middle">16</text><rect x="195.6" y="600.1" width="5.6" height="1.1" fill="#e0e0e0"/><text transform="translate(200.9 614.8) rotate(-90)" text-anchor="middle">17</text><rect x="195.6" y="629.1" width="5.6" height="1.1" fill="#e0e0e0"/><text transform="translate(200.9 643.8) rotate(-90)" text-anchor="middle">18</text><rect x="195.6" y="658.2" width="5.6" height="1.1" fill="#e0e0e0"/><text transform="translate(200.9 672.8) rotate(-90)" text-anchor="middle">19</text><rect x="195.6" y="687.2" width="5.6" height="1.1" fill="#e0e0e0"/><text transform="translate(200.9 701.9) rotate(-90)" text-anchor="middle">20</text></g></svg>
<div style="left:462.5px;top:380px;width:1.4px;height:9.5px;background:#000;"></div>
<div style="left:183px;top:713px;width:1316px;height:34px;background:#373737;border-radius:0 0 7px 7px;"></div>
<span class="t" style="left:197px;top:722.8000000000001px;font-size:12px;line-height:18px;color:#fff;word-spacing:1px;letter-spacing:0.1px;">第 1 页，共 1 页</span>
<span class="t" style="left:318px;top:722.8000000000001px;font-size:12px;line-height:18px;color:#fff;">31 个字</span>
<svg class="i" style="left:391px;top:723px;" width="15" height="15" viewBox="0 0 15 15"><path d="M7 12.6 H1.4 V1.4 H11.4 V6" fill="none" stroke="#e6e6e6" stroke-width="1.1"/><path d="M6.2 1.4 V12.6" stroke="#e6e6e6" stroke-width="1.1"/><path d="M8.6 8 L13.6 13.6 M13.6 8 L8.6 13.6" stroke="#e6e6e6" stroke-width="1.2"/></svg>
<span class="t" style="left:434.5px;top:722.8000000000001px;font-size:12px;line-height:18px;color:#fff;">英语(美国)</span>
<span class="t" style="left:521px;top:722.8000000000001px;font-size:12px;line-height:18px;color:#fff;">文本预测: 打开</span>
<svg class="i" style="left:631px;top:722px;" width="16" height="17" viewBox="0 0 16 17"><circle cx="5.4" cy="3" r="1.7" fill="none" stroke="#e6e6e6" stroke-width="1"/><path d="M1.4 5.6 C4 7 6.8 7 9.4 5.6 M5.4 6.6 V10 M5.4 10 L3 15 M5.4 10 L7.2 12.6" fill="none" stroke="#e6e6e6" stroke-width="1.1"/><path d="M8.4 12.4 L10.6 14.8 L15 8.8" fill="none" stroke="#e6e6e6" stroke-width="1.2"/></svg>
<span class="t" style="left:650.5px;top:722.8000000000001px;font-size:12px;line-height:18px;color:#fff;">辅助功能: 一切就绪</span>
<svg class="i" style="left:999px;top:723px;" width="16" height="15" viewBox="0 0 16 15"><path d="M6.6 10.4 H1.4 V1.6 H13.6 V6" fill="none" stroke="#e6e6e6" stroke-width="1.1"/><circle cx="11.2" cy="10.4" r="2.2" fill="none" stroke="#e6e6e6" stroke-width="1.2"/><path d="M11.2 6.4 V7.8 M11.2 13 V14.4 M7.2 10.4 H8.6 M13.8 10.4 H15.2 M8.4 7.6 L9.4 8.6 M13 12.2 L14 13.2 M14 7.6 L13 8.6 M9.4 12.2 L8.4 13.2" stroke="#e6e6e6" stroke-width="1"/></svg>
<span class="t" style="left:1017px;top:722.8000000000001px;font-size:12px;line-height:18px;color:#fff;">显示器设置</span>
<svg class="i" style="left:1105px;top:723px;" width="17" height="15" viewBox="0 0 17 15"><path d="M1.2 4.4 V1.4 H4.2 M12.4 1.4 H15.4 V4.4 M15.4 10.4 V13.4 H12.4 M4.2 13.4 H1.2 V10.4" fill="none" stroke="#e6e6e6" stroke-width="1.1"/><path d="M5.2 3.4 H9.6 L11.6 5.4 V11.4 H5.2 Z M9.4 3.4 V5.6 H11.6" fill="none" stroke="#e6e6e6" stroke-width="1"/></svg>
<span class="t" style="left:1123.5px;top:722.8000000000001px;font-size:12px;line-height:18px;color:#fff;">专注</span>
<svg class="i" style="left:1178px;top:723px;" width="14" height="15" viewBox="0 0 14 15"><path d="M7 2.6 V13 M7 2.6 C5.4 1.6 3 1.4 1.2 1.8 V12.4 C3 12 5.4 12.2 7 13 C8.6 12.2 11 12 12.8 12.4 V1.8 C11 1.4 8.6 1.6 7 2.6" fill="none" stroke="#e6e6e6" stroke-width="1"/><path d="M2.8 4.2 H5.4 M2.8 6.4 H5.4 M2.8 8.6 H5.4 M8.6 4.2 H11.2 M8.6 6.4 H11.2 M8.6 8.6 H11.2" stroke="#e6e6e6" stroke-width="0.9"/></svg>
<div style="left:1207px;top:715px;width:42px;height:31px;background:#474747;"></div>
<svg class="i" style="left:1221px;top:722px;" width="13" height="17" viewBox="0 0 13 17"><rect x="1.2" y="1.2" width="10.6" height="14.6" fill="none" stroke="#fff" stroke-width="1.1"/><path d="M3.4 4.4 H9.6 M3.4 6.8 H9.6 M3.4 9.2 H9.6 M3.4 11.6 H9.6" stroke="#fff" stroke-width="1"/></svg>
<svg class="i" style="left:1262px;top:722px;" width="16" height="17" viewBox="0 0 16 17"><path d="M8 14.6 H1.2 V1.2 H12.6 V7.4" fill="none" stroke="#e6e6e6" stroke-width="1.1"/><path d="M3.2 4 H10.6 M3.2 6.4 H10.6 M3.2 8.8 H7 M3.2 11.2 H6" stroke="#e6e6e6" stroke-width="1"/><circle cx="11" cy="12" r="4" fill="#e6e6e6"/><path d="M7.2 12 H14.8 M11 8.2 V15.8" stroke="#353638" stroke-width="0.8"/><ellipse cx="11" cy="12" rx="1.8" ry="3.8" fill="none" stroke="#353638" stroke-width="0.8"/></svg>
<div style="left:1295px;top:730px;width:9px;height:1.2px;background:#e6e6e6;"></div>
<div style="left:2px;top:237px;width:1316px;height:148.6px;background:#353638;"></div>
<span class="t" style="left:20px;top:244.65px;font-size:12.8px;line-height:19.3px;color:#fff;letter-spacing:0.5px;">文件</span>
<span class="t" style="left:68.5px;top:244.65px;font-size:12.8px;line-height:19.3px;color:#fff;letter-spacing:0.5px;">开始</span>
<span class="t" style="left:114px;top:244.65px;font-size:12.8px;line-height:19.3px;color:#fff;letter-spacing:0.5px;">插入</span>
<span class="t" style="left:158.7px;top:244.65px;font-size:12.8px;line-height:19.3px;color:#fff;letter-spacing:0.5px;">绘图</span>
<span class="t" style="left:204px;top:244.65px;font-size:12.8px;line-height:19.3px;color:#fff;letter-spacing:0.5px;">设计</span>
<span class="t" style="left:248.6px;top:244.65px;font-size:12.8px;line-height:19.3px;color:#fff;letter-spacing:0.5px;">布局</span>
<span class="t" style="left:293.5px;top:244.65px;font-size:12.8px;line-height:19.3px;color:#fff;letter-spacing:0.5px;">引用</span>
<span class="t" style="left:338.5px;top:244.65px;font-size:12.8px;line-height:19.3px;color:#fff;letter-spacing:0.5px;">邮件</span>
<span class="t" style="left:383.5px;top:244.65px;font-size:12.8px;line-height:19.3px;color:#fff;letter-spacing:0.5px;">审阅</span>
<span class="t" style="left:428.5px;top:244.65px;font-size:12.8px;line-height:19.3px;color:#fff;letter-spacing:0.5px;">视图</span>
<span class="t" style="left:475px;top:244.65px;font-size:13.3px;line-height:19.3px;color:#fff;letter-spacing:0.55px;">Zotero</span>
<span class="t" style="left:537.7px;top:244.65px;font-size:12.8px;line-height:19.3px;color:#fff;letter-spacing:0.5px;">帮助</span>
<span class="t" style="left:584.6px;top:244.65px;font-size:13.3px;line-height:19.3px;color:#fff;letter-spacing:-0.42px;">BLUEBEAM</span>
<span class="t" style="left:673.7px;top:244.65px;font-size:12.8px;line-height:19.3px;color:#fff;letter-spacing:0.5px;">有道翻译</span>
<span class="t" style="left:745px;top:244.65px;font-size:12.8px;line-height:19.3px;color:#fff;letter-spacing:0.5px;">百度网盘</span>
<span class="t" style="left:816px;top:244.65px;font-size:12.8px;line-height:19.3px;color:#7aa7f7;font-weight:bold;letter-spacing:0.5px;">公式</span>
<div style="left:816px;top:263.5px;width:26px;height:2px;background:#7aa3f5;border-radius:1px;"></div>
<div style="left:1078.5px;top:242.2px;width:59.5px;height:24px;background:#3b3b3b;border:1px solid #7d7d7d;border-radius:4px;"></div>
<svg class="i" style="left:1085px;top:247.2px;" width="14" height="13" viewBox="0 0 14 13"><path d="M1.7 1.7 H11.8 V8.3 H5.6 L3.4 10.8 V8.3 H1.7 Z" fill="none" stroke="#fff" stroke-width="1.1" stroke-linejoin="round"/></svg>
<span class="t" style="left:1102px;top:244.54999999999998px;font-size:12.8px;line-height:19.3px;color:#fff;letter-spacing:0.5px;">批注</span>
<div style="left:1146.5px;top:240.2px;width:78.5px;height:27.5px;background:#414141;border:1px solid #858585;border-radius:5px;"></div>
<svg class="i" style="left:1153px;top:245.2px;" width="18" height="18" viewBox="0 0 18 18"><path d="M2.2 15.8 L3.2 11.6 L12.3 2.5 A1.9 1.9 0 0 1 15.2 5.3 L6.2 14.5 Z M3.2 11.6 L6.2 14.5 M11 3.8 L14 6.7" fill="none" stroke="#fff" stroke-width="1.1" stroke-linejoin="round"/></svg>
<span class="t" style="left:1176px;top:244.54999999999998px;font-size:12.8px;line-height:19.3px;color:#fff;letter-spacing:0.5px;">编辑</span>
<svg class="i" style="left:1205px;top:250px;" width="11" height="9" viewBox="0 0 11 9"><path d="M2.4 2.6 L5 4.8100000000000005 L7.6 2.6" fill="none" stroke="#fff" stroke-width="1.4" stroke-linecap="round" stroke-linejoin="round" transform="translate(0.00 0.20)"/></svg>
<div style="left:1233px;top:242.2px;width:72.5px;height:24px;background:#5a8df0;border-radius:4px;"></div>
<svg class="i" style="left:1240px;top:247.2px;" width="13" height="13" viewBox="0 0 13 13"><path d="M4.5 3.5 H2 V11.5 H10 V9.5" fill="none" stroke="#000" stroke-width="1.1"/><path d="M4.2 9.5 C4.5 6.5 6.3 4.9 8.6 4.9 V2.4 L12 5.9 L8.6 9.2 V6.9 C6.8 6.9 5.3 7.7 4.2 9.5 Z" fill="none" stroke="#000" stroke-width="1" stroke-linejoin="round"/></svg>
<span class="t" style="left:1257px;top:243.35px;font-size:12.8px;line-height:19.3px;color:#000;letter-spacing:0.5px;">共享</span>
<svg class="i" style="left:1293px;top:251px;" width="11" height="9" viewBox="0 0 11 9"><path d="M2.4 2.6 L5 4.8100000000000005 L7.6 2.6" fill="none" stroke="#000" stroke-width="1.4" stroke-linecap="round" stroke-linejoin="round" transform="translate(0.00 0.20)"/></svg>
<div style="left:9.6px;top:269px;width:1300.4px;height:116.4px;background:#4d4d4d;border-radius:8px 8px 7px 7px;"></div>
<div style="left:118px;top:274px;width:1px;height:106px;background:#7c7c7c;"></div>
<div style="left:273px;top:274px;width:1px;height:106px;background:#7c7c7c;"></div>
<div style="left:684px;top:274px;width:1px;height:106px;background:#7c7c7c;"></div>
<div style="left:1263px;top:274px;width:1px;height:106px;background:#7c7c7c;"></div>
<svg class="i" style="left:30px;top:279px;" width="17" height="15" viewBox="0 0 17 15"><g transform="translate(1.10 0.90)"><path d="M0 0.5 H13.6 M3 0.5 V12.6 M1.6 12.6 H3 M10.3 0.5 V10.4 Q10.3 12.7 13.3 12.5" fill="none" stroke="#d6d6d6" stroke-width="1.1"/></g></svg>
<span class="t" style="left:52px;top:279.0px;font-size:12px;line-height:18px;color:#fff;">公式</span>
<svg class="i" style="left:78px;top:282px;" width="11" height="9" viewBox="0 0 11 9"><path d="M2.4 2.6 L5 4.8100000000000005 L7.6 2.6" fill="none" stroke="#f0f0f0" stroke-width="1.4" stroke-linecap="round" stroke-linejoin="round" transform="translate(0.30 0.80)"/></svg>
<svg class="i" style="left:29px;top:309px;" width="18" height="16" viewBox="0 0 18 16"><rect x="1.5" y="1.5" width="15" height="13" fill="none" stroke="#d6d6d6" stroke-width="1"/><path d="M3.2 7.8 L4.8 7.2 L6.6 11.6 L8.4 4.5 H13.8" fill="none" stroke="#3a96dd" stroke-width="1.2"/><path d="M5.8 16 L9.6 10.2 L16.6 5.4" fill="none" stroke="#4d4d4d" stroke-width="4.4"/><path d="M16 6.2 L12.4 9.6" stroke="#c9c9c9" stroke-width="2.4" stroke-linecap="round"/><path d="M12.2 10 L7.6 14.6" stroke="#e0474c" stroke-width="2.4" stroke-linecap="round"/></svg>
<span class="t" style="left:51.6px;top:308.9px;font-size:12px;line-height:18px;color:#fff;">墨迹公式</span>
<span class="t c" style="left:6.0px;top:365.59999999999997px;width:120px;font-size:12px;line-height:18px;color:#fff;">工具</span>
<svg class="i" style="left:138px;top:278px;" width="9" height="18" viewBox="0 0 9 18"><path d="M7.4 1 L1.6 17" stroke="#d6d6d6" stroke-width="1.1"/></svg>
<span class="t" style="left:157.7px;top:277.5px;font-size:12.6px;line-height:18.6px;color:#fff;letter-spacing:0.2px;">Unicode</span>
<div style="left:127px;top:303px;width:76px;height:28px;background:#5f5f5f;border:1px solid #8e8e8e;border-radius:5px;"></div>
<span class="t" style="left:157.7px;top:307.7px;font-size:12.6px;line-height:18.6px;color:#fff;letter-spacing:-0.2px;">LaTeX</span>
<span class="t" style="left:157.3px;top:339.2px;font-size:12px;line-height:18px;color:#fff;">文本</span>
<span class="t c" style="left:120.30000000000001px;top:365.59999999999997px;width:120px;font-size:12px;line-height:18px;color:#fff;">转换</span>
<svg class="i" style="left:253px;top:371px;" width="10" height="10" viewBox="0 0 10 10"><path d="M1.5 6 V1.5 H6 M3.6 3.6 L8.2 8.2 M8.5 4 V8.5 H4" fill="none" stroke="#d6d6d6" stroke-width="1"/></svg>
<div style="left:225px;top:320px;width:34px;height:1px;background:#8a8a8a;"></div>
<span class="t c" style="left:181.8px;top:322.8px;width:120px;font-size:12px;line-height:18px;color:#fff;">转换</span>
<svg class="i" style="left:236px;top:341px;" width="11" height="9" viewBox="0 0 11 9"><path d="M2.4 2.6 L5 4.8100000000000005 L7.6 2.6" fill="none" stroke="#f0f0f0" stroke-width="1.4" stroke-linecap="round" stroke-linejoin="round" transform="translate(0.40 0.60)"/></svg>
<div style="left:283.5px;top:281.5px;width:390px;height:61px;border:1px solid #808080;border-radius:5px;"></div>
<div style="left:646px;top:282px;width:1px;height:60px;background:#808080;"></div>
<svg class="i" style="left:654px;top:308px;" width="11" height="9" viewBox="0 0 11 9"><path d="M2.4 2.6 L5 4.8100000000000005 L7.6 2.6" fill="none" stroke="#f0f0f0" stroke-width="1.4" stroke-linecap="round" stroke-linejoin="round" transform="translate(0.50 0.50)"/></svg>
<div style="left:288.4px;top:285.3px;width:23.2px;height:23.4px;background:#f0f0f0;border:1px solid #fafafa;color:#3c3c3c;font-family:'DejaVu Sans',sans-serif;font-size:13.5px;line-height:21px;text-align:center;">±</div>
<div style="left:318.4px;top:285.3px;width:23.2px;height:23.4px;background:#f0f0f0;border:1px solid #fafafa;color:#3c3c3c;font-family:'DejaVu Sans',sans-serif;font-size:13.5px;line-height:21px;text-align:center;">∞</div>
<div style="left:348.4px;top:285.3px;width:23.2px;height:23.4px;background:#f0f0f0;border:1px solid #fafafa;color:#3c3c3c;font-family:'DejaVu Sans',sans-serif;font-size:13.5px;line-height:21px;text-align:center;">=</div>
<div style="left:378.5px;top:285.3px;width:23.2px;height:23.4px;background:#f0f0f0;border:1px solid #fafafa;color:#3c3c3c;font-family:'DejaVu Sans',sans-serif;font-size:13.5px;line-height:21px;text-align:center;">≠</div>
<div style="left:408.5px;top:285.3px;width:23.2px;height:23.4px;background:#f0f0f0;border:1px solid #fafafa;color:#3c3c3c;font-family:'DejaVu Sans',sans-serif;font-size:13.5px;line-height:21px;text-align:center;">~</div>
<div style="left:438.5px;top:285.3px;width:23.2px;height:23.4px;background:#f0f0f0;border:1px solid #fafafa;color:#3c3c3c;font-family:'DejaVu Sans',sans-serif;font-size:13.5px;line-height:21px;text-align:center;">×</div>
<div style="left:468.5px;top:285.3px;width:23.2px;height:23.4px;background:#f0f0f0;border:1px solid #fafafa;color:#3c3c3c;font-family:'DejaVu Sans',sans-serif;font-size:13.5px;line-height:21px;text-align:center;">÷</div>
<div style="left:498.5px;top:285.3px;width:23.2px;height:23.4px;background:#f0f0f0;border:1px solid #fafafa;color:#3c3c3c;font-family:'DejaVu Sans',sans-serif;font-size:13.5px;line-height:21px;text-align:center;">!</div>
<div style="left:528.6px;top:285.3px;width:23.2px;height:23.4px;background:#f0f0f0;border:1px solid #fafafa;color:#3c3c3c;font-family:'DejaVu Sans',sans-serif;font-size:13.5px;line-height:21px;text-align:center;">∝</div>
<div style="left:558.6px;top:285.3px;width:23.2px;height:23.4px;background:#f0f0f0;border:1px solid #fafafa;color:#3c3c3c;font-family:'DejaVu Sans',sans-serif;font-size:13.5px;line-height:21px;text-align:center;">&lt;</div>
<div style="left:588.6px;top:285.3px;width:23.2px;height:23.4px;background:#f0f0f0;border:1px solid #fafafa;color:#3c3c3c;font-family:'DejaVu Sans',sans-serif;font-size:13.5px;line-height:21px;text-align:center;">≪</div>
<div style="left:618.6px;top:285.3px;width:23.2px;height:23.4px;background:#f0f0f0;border:1px solid #fafafa;color:#3c3c3c;font-family:'DejaVu Sans',sans-serif;font-size:13.5px;line-height:21px;text-align:center;">&gt;</div>
<div style="left:288.4px;top:315.3px;width:23.2px;height:23.4px;background:#f0f0f0;border:1px solid #fafafa;color:#3c3c3c;font-family:'DejaVu Sans',sans-serif;font-size:13.5px;line-height:21px;text-align:center;">≫</div>
<div style="left:318.4px;top:315.3px;width:23.2px;height:23.4px;background:#f0f0f0;border:1px solid #fafafa;color:#3c3c3c;font-family:'DejaVu Sans',sans-serif;font-size:13.5px;line-height:21px;text-align:center;">≤</div>
<div style="left:348.4px;top:315.3px;width:23.2px;height:23.4px;background:#f0f0f0;border:1px solid #fafafa;color:#3c3c3c;font-family:'DejaVu Sans',sans-serif;font-size:13.5px;line-height:21px;text-align:center;">≥</div>
<div style="left:378.5px;top:315.3px;width:23.2px;height:23.4px;background:#f0f0f0;border:1px solid #fafafa;color:#3c3c3c;font-family:'DejaVu Sans',sans-serif;font-size:13.5px;line-height:21px;text-align:center;">∓</div>
<div style="left:408.5px;top:315.3px;width:23.2px;height:23.4px;background:#f0f0f0;border:1px solid #fafafa;color:#3c3c3c;font-family:'DejaVu Sans',sans-serif;font-size:13.5px;line-height:21px;text-align:center;">≅</div>
<div style="left:438.5px;top:315.3px;width:23.2px;height:23.4px;background:#f0f0f0;border:1px solid #fafafa;color:#3c3c3c;font-family:'DejaVu Sans',sans-serif;font-size:13.5px;line-height:21px;text-align:center;">≈</div>
<div style="left:468.5px;top:315.3px;width:23.2px;height:23.4px;background:#f0f0f0;border:1px solid #fafafa;color:#3c3c3c;font-family:'DejaVu Sans',sans-serif;font-size:13.5px;line-height:21px;text-align:center;">≡</div>
<div style="left:498.5px;top:315.3px;width:23.2px;height:23.4px;background:#f0f0f0;border:1px solid #fafafa;color:#3c3c3c;font-family:'DejaVu Sans',sans-serif;font-size:13.5px;line-height:21px;text-align:center;">∀</div>
<div style="left:528.6px;top:315.3px;width:23.2px;height:23.4px;background:#f0f0f0;border:1px solid #fafafa;color:#3c3c3c;font-family:'DejaVu Sans',sans-serif;font-size:13.5px;line-height:21px;text-align:center;">∁</div>
<div style="left:558.6px;top:315.3px;width:23.2px;height:23.4px;background:#f0f0f0;border:1px solid #fafafa;color:#3c3c3c;font-family:'DejaVu Sans',sans-serif;font-size:13.5px;line-height:21px;text-align:center;">∂</div>
<div style="left:588.6px;top:315.3px;width:23.2px;height:23.4px;background:#f0f0f0;border:1px solid #fafafa;color:#3c3c3c;font-family:'DejaVu Sans',sans-serif;font-size:13.5px;line-height:21px;text-align:center;">√</div>
<div style="left:618.6px;top:315.3px;width:23.2px;height:23.4px;background:#f0f0f0;border:1px solid #fafafa;color:#3c3c3c;font-family:'DejaVu Sans',sans-serif;font-size:13.5px;line-height:21px;text-align:center;">∛</div>
<span class="t c" style="left:418.7px;top:365.59999999999997px;width:120px;font-size:12px;line-height:18px;color:#fff;">符号</span>
<span class="t" style="left:136.14px;top:306.64px;font-size:16.42px;line-height:16.42px;color:#e6e6e6;font-family:'Noto Sans CJK SC',sans-serif;font-weight:300;">{</span>
<span class="t" style="left:144.74px;top:306.64px;font-size:16.42px;line-height:16.42px;color:#e6e6e6;font-family:'Noto Sans CJK SC',sans-serif;font-weight:300;">}</span>
<span class="t" style="left:135.15px;top:340.34px;font-size:13.54px;line-height:13.54px;color:#d8d8d8;font-family:'Noto Sans CJK SC',sans-serif;font-weight:300;">ab</span>
<span class="t" style="left:226.92px;top:282.19px;font-size:27.71px;line-height:27.71px;color:#c6c6c6;font-family:'Liberation Serif',serif;font-style:italic;">e</span>
<span class="t" style="left:243.14px;top:281.19px;font-size:29.23px;line-height:29.23px;color:#c6c6c6;font-family:'Liberation Serif',serif;font-style:italic;">x</span>
<svg class="i" style="left:237px;top:285px;" width="12" height="8" viewBox="0 0 12 8"><path d="M2 5.8 L5.4 2.6 L8.8 5.8" fill="none" stroke="#c6c6c6" stroke-width="1.1"/></svg>
<span class="t" style="left:713.33px;top:273.36px;font-size:22.2px;line-height:22.2px;color:#c6c6c6;font-family:'Liberation Serif',serif;font-style:italic;">x</span>
<div style="left:710px;top:293.2px;width:14.2px;height:1.1px;background:#c6c6c6;"></div>
<span class="t" style="left:712.12px;top:286.28px;font-size:22.69px;line-height:22.69px;color:#c6c6c6;font-family:'Liberation Serif',serif;font-style:italic;">y</span>
<span class="t c" style="left:656.9px;top:319.0px;width:120px;font-size:12px;line-height:18px;color:#fff;">分式</span>
<svg class="i" style="left:713px;top:337px;" width="11" height="9" viewBox="0 0 11 9"><path d="M2.4 2.6 L5 4.8100000000000005 L7.6 2.6" fill="none" stroke="#f0f0f0" stroke-width="1.4" stroke-linecap="round" stroke-linejoin="round" transform="translate(0.40 0.60)"/></svg>
<span class="t" style="left:751.34px;top:274.49px;font-size:42.5px;line-height:42.5px;color:#c6c6c6;font-family:'Liberation Serif',serif;font-style:italic;">e</span>
<span class="t" style="left:771.96px;top:273.95px;font-size:20.66px;line-height:20.66px;color:#c6c6c6;font-family:'Liberation Serif',serif;font-style:italic;">x</span>
<span class="t c" style="left:707.1px;top:319.0px;width:120px;font-size:12px;line-height:18px;color:#fff;">上下标</span>
<svg class="i" style="left:763px;top:337px;" width="11" height="9" viewBox="0 0 11 9"><path d="M2.4 2.6 L5 4.8100000000000005 L7.6 2.6" fill="none" stroke="#f0f0f0" stroke-width="1.4" stroke-linecap="round" stroke-linejoin="round" transform="translate(0.60 0.60)"/></svg>
<span class="t" style="left:802.88px;top:280.66px;font-size:14.62px;line-height:14.62px;color:#c6c6c6;font-family:'Liberation Serif',serif;font-style:italic;">n</span>
<svg class="i" style="left:800px;top:280px;" width="34" height="30" viewBox="0 0 34 30"><path d="M3.7 14.8 L6 13.6 L10.5 25 L14.6 6.6 H30.8" fill="none" stroke="#c6c6c6" stroke-width="1.2" stroke-linejoin="miter"/></svg>
<span class="t" style="left:814.89px;top:275.0px;font-size:36.04px;line-height:36.04px;color:#c6c6c6;font-family:'Liberation Serif',serif;font-style:italic;">x</span>
<span class="t c" style="left:756.9px;top:319.0px;width:120px;font-size:12px;line-height:18px;color:#fff;">根式</span>
<svg class="i" style="left:813px;top:337px;" width="11" height="9" viewBox="0 0 11 9"><path d="M2.4 2.6 L5 4.8100000000000005 L7.6 2.6" fill="none" stroke="#f0f0f0" stroke-width="1.4" stroke-linecap="round" stroke-linejoin="round" transform="translate(0.40 0.60)"/></svg>
<span class="t" style="left:853.16px;top:279.84px;font-size:24.67px;line-height:24.67px;color:#c6c6c6;font-family:'Liberation Serif',serif;font-style:italic;">∫</span>
<span class="t" style="left:861.6px;top:274.5px;font-size:20.0px;line-height:20.0px;color:#c6c6c6;font-family:'Liberation Serif',serif;font-style:italic;">x</span>
<div style="left:860px;top:305.1px;width:10.9px;height:1.1px;background:#c6c6c6;"></div>
<span class="t" style="left:872.0px;top:293.4px;font-size:20.0px;line-height:20.0px;color:#c6c6c6;font-family:'Liberation Serif',serif;font-style:italic;">x</span>
<span class="t c" style="left:806.6px;top:319.0px;width:120px;font-size:12px;line-height:18px;color:#fff;">积分</span>
<svg class="i" style="left:863px;top:337px;" width="11" height="9" viewBox="0 0 11 9"><path d="M2.4 2.6 L5 4.8100000000000005 L7.6 2.6" fill="none" stroke="#f0f0f0" stroke-width="1.4" stroke-linecap="round" stroke-linejoin="round" transform="translate(0.10 0.60)"/></svg>
<span class="t" style="left:914.08px;top:279.97px;font-size:7.74px;line-height:7.74px;color:#c6c6c6;font-family:'Liberation Serif',serif;font-style:italic;">n</span>
<span class="t" style="left:912.18px;top:285.82px;font-size:17.1px;line-height:17.1px;color:#c6c6c6;font-family:'Liberation Serif',serif;">Σ</span>
<span class="t" style="left:908.41px;top:301.01px;font-size:10.52px;line-height:10.52px;color:#c6c6c6;font-family:'Liberation Serif',serif;font-style:italic;letter-spacing:0.06em;">i=0</span>
<span class="t c" style="left:856.9px;top:319.0px;width:120px;font-size:12px;line-height:18px;color:#fff;">大型</span>
<span class="t c" style="left:850.5px;top:333.3px;width:120px;font-size:12px;line-height:18px;color:#fff;">运算符</span>
<svg class="i" style="left:931px;top:337px;" width="11" height="9" viewBox="0 0 11 9"><path d="M2.4 2.6 L5 4.8100000000000005 L7.6 2.6" fill="none" stroke="#f0f0f0" stroke-width="1.4" stroke-linecap="round" stroke-linejoin="round" transform="translate(0.50 0.60)"/></svg>
<span class="t" style="left:951.02px;top:285.16px;font-size:18.22px;line-height:18.22px;color:#c6c6c6;font-family:'Liberation Serif',serif;">{( )}</span>
<span class="t c" style="left:907.9px;top:319.0px;width:120px;font-size:12px;line-height:18px;color:#fff;">括号</span>
<svg class="i" style="left:964px;top:337px;" width="11" height="9" viewBox="0 0 11 9"><path d="M2.4 2.6 L5 4.8100000000000005 L7.6 2.6" fill="none" stroke="#f0f0f0" stroke-width="1.4" stroke-linecap="round" stroke-linejoin="round" transform="translate(0.40 0.60)"/></svg>
<span class="t" style="left:1003.71px;top:286.84px;font-size:16.76px;line-height:16.76px;color:#c6c6c6;font-family:'Liberation Serif',serif;">sinθ</span>
<span class="t c" style="left:958.0px;top:319.0px;width:120px;font-size:12px;line-height:18px;color:#fff;">函数</span>
<svg class="i" style="left:1014px;top:337px;" width="11" height="9" viewBox="0 0 11 9"><path d="M2.4 2.6 L5 4.8100000000000005 L7.6 2.6" fill="none" stroke="#f0f0f0" stroke-width="1.4" stroke-linecap="round" stroke-linejoin="round" transform="translate(0.50 0.60)"/></svg>
<span class="t" style="left:1057.63px;top:273.78px;font-size:42.75px;line-height:42.75px;color:#c6c6c6;font-family:'Liberation Serif',serif;font-style:italic;">ä</span>
<span class="t c" style="left:1007.9000000000001px;top:319.0px;width:120px;font-size:12px;line-height:18px;color:#fff;">标注符号</span>
<svg class="i" style="left:1064px;top:337px;" width="11" height="9" viewBox="0 0 11 9"><path d="M2.4 2.6 L5 4.8100000000000005 L7.6 2.6" fill="none" stroke="#f0f0f0" stroke-width="1.4" stroke-linecap="round" stroke-linejoin="round" transform="translate(0.40 0.60)"/></svg>
<span class="t" style="left:1111.02px;top:280.17px;font-size:20.87px;line-height:20.87px;color:#c6c6c6;font-family:'Liberation Serif',serif;">lim</span>
<span class="t" style="left:1111.45px;top:296.65px;font-size:13.55px;line-height:13.55px;color:#c6c6c6;font-family:'Liberation Serif',serif;font-style:italic;">n</span>
<span class="t" style="left:1119.88px;top:299.28px;font-size:10.27px;line-height:10.27px;color:#c6c6c6;font-family:'DejaVu Sans',sans-serif;">→</span>
<span class="t" style="left:1127.77px;top:296.27px;font-size:15.48px;line-height:15.48px;color:#c6c6c6;font-family:'DejaVu Sans',sans-serif;">∞</span>
<span class="t c" style="left:1065.4px;top:319.0px;width:120px;font-size:12px;line-height:18px;color:#fff;">极限和对数</span>
<svg class="i" style="left:1121px;top:337px;" width="11" height="9" viewBox="0 0 11 9"><path d="M2.4 2.6 L5 4.8100000000000005 L7.6 2.6" fill="none" stroke="#f0f0f0" stroke-width="1.4" stroke-linecap="round" stroke-linejoin="round" transform="translate(0.90 0.60)"/></svg>
<span class="t" style="left:1173.48px;top:277.57px;font-size:26.26px;line-height:26.26px;color:#c6c6c6;font-family:'Liberation Serif',serif;">Δ</span>
<div style="left:1168px;top:303px;width:28px;height:2.2px;background:#c6c6c6;"></div>
<div style="left:1168px;top:307.8px;width:28px;height:2.2px;background:#c6c6c6;"></div>
<span class="t c" style="left:1122.2px;top:319.0px;width:120px;font-size:12px;line-height:18px;color:#fff;">运算符</span>
<svg class="i" style="left:1178px;top:337px;" width="11" height="9" viewBox="0 0 11 9"><path d="M2.4 2.6 L5 4.8100000000000005 L7.6 2.6" fill="none" stroke="#f0f0f0" stroke-width="1.4" stroke-linecap="round" stroke-linejoin="round" transform="translate(0.70 0.60)"/></svg>
<svg class="i" style="left:1217.6px;top:281.7px;" width="29" height="29" viewBox="0 0 29 29"><path d="M4.6 1.1 H1.1 V27.4 H4.6 M24.4 1.1 H27.9 V27.4 H24.4" fill="none" stroke="#c6c6c6" stroke-width="1.1"/></svg>
<span class="t" style="left:1224.15px;top:283.48px;font-size:13.04px;line-height:13.04px;color:#c6c6c6;font-family:'Liberation Serif',serif;letter-spacing:-0.04em;">1 0</span>
<span class="t" style="left:1224.6px;top:295.38px;font-size:13.04px;line-height:13.04px;color:#c6c6c6;font-family:'Liberation Serif',serif;letter-spacing:-0.04em;">0 1</span>
<span class="t c" style="left:1171.9px;top:319.0px;width:120px;font-size:12px;line-height:18px;color:#fff;">矩阵</span>
<svg class="i" style="left:1228px;top:337px;" width="11" height="9" viewBox="0 0 11 9"><path d="M2.4 2.6 L5 4.8100000000000005 L7.6 2.6" fill="none" stroke="#f0f0f0" stroke-width="1.4" stroke-linecap="round" stroke-linejoin="round" transform="translate(0.40 0.60)"/></svg>
<span class="t c" style="left:913.4px;top:365.59999999999997px;width:120px;font-size:12px;line-height:18px;color:#fff;">结构</span>
<svg class="i" style="left:1283px;top:367px;" width="13" height="10" viewBox="0 0 13 10"><path d="M1.6 2.4 L6.5 7.2 L11.4 2.4" fill="none" stroke="#d6d6d6" stroke-width="1.2"/></svg>
<div style="left:1328px;top:113px;width:420px;height:706px;background:#4d4d4d;border:1px solid #7a7a7a;border-right-color:#4a4a4a;border-bottom-color:#444;border-radius:4px 4px 0 0;box-shadow:0 0 3px rgba(0,0,0,.3);"></div>
<div style="left:1730px;top:114px;width:17.5px;height:582px;background:#3f3f3f;border-radius:0 3px 0 0;"></div>
<svg class="i" style="left:1733px;top:119px;" width="11" height="9" viewBox="0 0 11 9"><path d="M5.4 1 L10 7.6 H0.8 Z" fill="#c4c4c4" stroke="#c4c4c4" stroke-width="0.8" stroke-linejoin="round"/></svg>
<div style="left:1734px;top:131.5px;width:9px;height:310.5px;background:#c4c4c4;"></div>
<svg class="i" style="left:1733px;top:682px;" width="11" height="9" viewBox="0 0 11 9"><path d="M0.8 1.4 H10 L5.4 8 Z" fill="#c4c4c4" stroke="#c4c4c4" stroke-width="0.8" stroke-linejoin="round"/></svg>
<div style="left:1329px;top:696px;width:418.5px;height:1px;background:#8c8c8c;"></div>
<span class="t" style="left:1344.5px;top:122.0px;font-size:12px;line-height:18px;color:#fff;font-weight:bold;">内置</span>
<span class="t" style="left:1344.5px;top:150.0px;font-size:12px;line-height:18px;color:#fff;font-weight:bold;">二次公式</span>
<div style="left:1344px;top:174px;width:377px;height:72px;background:#fff;border-top:1px solid #1a1a1a;border-left:1px solid #1a1a1a;"></div>
<span class="t" style="left:1344.5px;top:260.0px;font-size:12px;line-height:18px;color:#fff;font-weight:bold;">二项式定理</span>
<div style="left:1344px;top:284px;width:377px;height:72px;background:#fff;border-top:1px solid #1a1a1a;border-left:1px solid #1a1a1a;"></div>
<span class="t" style="left:1344.5px;top:370.0px;font-size:12px;line-height:18px;color:#fff;font-weight:bold;">傅立叶级数</span>
<div style="left:1344px;top:394px;width:377px;height:72px;background:#fff;border-top:1px solid #1a1a1a;border-left:1px solid #1a1a1a;"></div>
<span class="t" style="left:1344.5px;top:480.0px;font-size:12px;line-height:18px;color:#fff;font-weight:bold;">勾股定理</span>
<div style="left:1344px;top:504px;width:377px;height:72px;background:#fff;border-top:1px solid #1a1a1a;border-left:1px solid #1a1a1a;"></div>
<span class="t" style="left:1344.5px;top:590.0px;font-size:12px;line-height:18px;color:#fff;font-weight:bold;">和的展开式</span>
<div style="left:1344px;top:614px;width:377px;height:72px;background:#fff;border-top:1px solid #1a1a1a;border-left:1px solid #1a1a1a;"></div>
<span class="t" style="left:1348.23px;top:195.72px;font-size:14.5px;line-height:14.5px;color:#111;font-family:'DejaVu Serif',serif;font-style:italic;">x</span>
<span class="t" style="left:1360.18px;top:195.72px;font-size:14.5px;line-height:14.5px;color:#111;font-family:'DejaVu Serif',serif;">=</span>
<div style="left:1378px;top:203.1px;width:112px;height:1.1px;background:#111;"></div>
<span class="t" style="left:1377.18px;top:183.52px;font-size:14.5px;line-height:14.5px;color:#111;font-family:'DejaVu Serif',serif;">−</span>
<span class="t" style="left:1390.15px;top:183.52px;font-size:14.5px;line-height:14.5px;color:#111;font-family:'DejaVu Serif',serif;font-style:italic;">b</span>
<span class="t" style="left:1400.98px;top:183.52px;font-size:14.5px;line-height:14.5px;color:#111;font-family:'DejaVu Serif',serif;">±</span>
<svg class="i" style="left:1416px;top:178px;" width="76" height="22" viewBox="0 0 76 22"><path d="M2.4 12.6 L4.2 11.6 L7 18.2 L9.6 4.4 H74" fill="none" stroke="#111" stroke-width="1.05"/></svg>
<span class="t" style="left:1429.05px;top:183.52px;font-size:14.5px;line-height:14.5px;color:#111;font-family:'DejaVu Serif',serif;font-style:italic;">b</span>
<span class="t" style="left:1437.57px;top:181.31px;font-size:10.5px;line-height:10.5px;color:#111;font-family:'DejaVu Serif',serif;">2</span>
<span class="t" style="left:1448.78px;top:183.52px;font-size:14.5px;line-height:14.5px;color:#111;font-family:'DejaVu Serif',serif;">−</span>
<span class="t" style="left:1464.27px;top:183.52px;font-size:14.5px;line-height:14.5px;color:#111;font-family:'DejaVu Serif',serif;">4</span>
<span class="t" style="left:1472.79px;top:183.52px;font-size:14.5px;line-height:14.5px;color:#111;font-family:'DejaVu Serif',serif;font-style:italic;">a</span>
<span class="t" style="left:1481.85px;top:183.52px;font-size:14.5px;line-height:14.5px;color:#111;font-family:'DejaVu Serif',serif;font-style:italic;">c</span>
<span class="t" style="left:1424.78px;top:206.52px;font-size:14.5px;line-height:14.5px;color:#111;font-family:'DejaVu Serif',serif;">2</span>
<span class="t" style="left:1435.09px;top:206.52px;font-size:14.5px;line-height:14.5px;color:#111;font-family:'DejaVu Serif',serif;font-style:italic;">a</span>
<span class="t" style="left:1347.94px;top:312.22px;font-size:14.5px;line-height:14.5px;color:#111;font-family:'DejaVu Serif',serif;">(</span>
<span class="t" style="left:1355.33px;top:312.22px;font-size:14.5px;line-height:14.5px;color:#111;font-family:'DejaVu Serif',serif;font-style:italic;">x</span>
<span class="t" style="left:1366.48px;top:312.22px;font-size:14.5px;line-height:14.5px;color:#111;font-family:'DejaVu Serif',serif;">+</span>
<span class="t" style="left:1382.89px;top:312.22px;font-size:14.5px;line-height:14.5px;color:#111;font-family:'DejaVu Serif',serif;font-style:italic;">a</span>
<span class="t" style="left:1391.78px;top:312.22px;font-size:14.5px;line-height:14.5px;color:#111;font-family:'DejaVu Serif',serif;">)</span>
<span class="t" style="left:1399.27px;top:310.51px;font-size:10.5px;line-height:10.5px;color:#111;font-family:'DejaVu Serif',serif;font-style:italic;">n</span>
<span class="t" style="left:1410.48px;top:312.22px;font-size:14.5px;line-height:14.5px;color:#111;font-family:'DejaVu Serif',serif;">=</span>
<span class="t" style="left:1426.08px;top:295.97px;font-size:47.94px;line-height:47.94px;color:#111;font-family:'Liberation Serif',serif;transform-origin:1.92px 0;transform:scaleX(0.851);">Σ</span>
<span class="t" style="left:1433.47px;top:292.21px;font-size:10.5px;line-height:10.5px;color:#111;font-family:'DejaVu Serif',serif;font-style:italic;">n</span>
<span class="t" style="left:1428.08px;top:337.11px;font-size:10.5px;line-height:10.5px;color:#111;font-family:'DejaVu Serif',serif;font-style:italic;">k</span>
<span class="t" style="left:1433.70px;top:337.11px;font-size:10.5px;line-height:10.5px;color:#111;font-family:'DejaVu Serif',serif;">=</span>
<span class="t" style="left:1442.12px;top:337.11px;font-size:10.5px;line-height:10.5px;color:#111;font-family:'DejaVu Serif',serif;">0</span>
<span class="t" style="left:1451.15px;top:302.47px;font-size:29.89px;line-height:29.89px;color:#111;font-family:'Liberation Serif',serif;transform-origin:1.34px 0;transform:scaleX(0.827);">(</span>
<span class="t" style="left:1469.30px;top:302.47px;font-size:29.89px;line-height:29.89px;color:#111;font-family:'Liberation Serif',serif;transform-origin:0.90px 0;transform:scaleX(0.811);">)</span>
<span class="t" style="left:1459.78px;top:300.82px;font-size:14.5px;line-height:14.5px;color:#111;font-family:'DejaVu Serif',serif;font-style:italic;">n</span>
<span class="t" style="left:1460.42px;top:323.72px;font-size:14.5px;line-height:14.5px;color:#111;font-family:'DejaVu Serif',serif;font-style:italic;">k</span>
<span class="t" style="left:1480.43px;top:312.22px;font-size:14.5px;line-height:14.5px;color:#111;font-family:'DejaVu Serif',serif;font-style:italic;">x</span>
<span class="t" style="left:1488.08px;top:310.51px;font-size:10.5px;line-height:10.5px;color:#111;font-family:'DejaVu Serif',serif;font-style:italic;">k</span>
<span class="t" style="left:1498.29px;top:312.22px;font-size:14.5px;line-height:14.5px;color:#111;font-family:'DejaVu Serif',serif;font-style:italic;">a</span>
<span class="t" style="left:1507.17px;top:310.51px;font-size:10.5px;line-height:10.5px;color:#111;font-family:'DejaVu Serif',serif;font-style:italic;">n</span>
<span class="t" style="left:1513.50px;top:310.51px;font-size:10.5px;line-height:10.5px;color:#111;font-family:'DejaVu Serif',serif;">−</span>
<span class="t" style="left:1522.18px;top:310.51px;font-size:10.5px;line-height:10.5px;color:#111;font-family:'DejaVu Serif',serif;font-style:italic;">k</span>
<span class="t" style="left:1349.07px;top:423.02px;font-size:14.5px;line-height:14.5px;color:#111;font-family:'DejaVu Serif',serif;font-style:italic;">f</span>
<span class="t" style="left:1355.44px;top:423.02px;font-size:14.5px;line-height:14.5px;color:#111;font-family:'DejaVu Serif',serif;">(</span>
<span class="t" style="left:1362.33px;top:423.02px;font-size:14.5px;line-height:14.5px;color:#111;font-family:'DejaVu Serif',serif;font-style:italic;">x</span>
<span class="t" style="left:1373.18px;top:423.02px;font-size:14.5px;line-height:14.5px;color:#111;font-family:'DejaVu Serif',serif;">)</span>
<span class="t" style="left:1383.28px;top:423.02px;font-size:14.5px;line-height:14.5px;color:#111;font-family:'DejaVu Serif',serif;">=</span>
<span class="t" style="left:1400.19px;top:423.02px;font-size:14.5px;line-height:14.5px;color:#111;font-family:'DejaVu Serif',serif;font-style:italic;">a</span>
<span class="t" style="left:1409.32px;top:430.41px;font-size:10.5px;line-height:10.5px;color:#111;font-family:'DejaVu Serif',serif;">0</span>
<span class="t" style="left:1419.78px;top:423.02px;font-size:14.5px;line-height:14.5px;color:#111;font-family:'DejaVu Serif',serif;">+</span>
<span class="t" style="left:1434.40px;top:407.05px;font-size:47.48px;line-height:47.48px;color:#111;font-family:'Liberation Serif',serif;transform-origin:1.90px 0;transform:scaleX(0.864);">Σ</span>
<span class="t" style="left:1440.54px;top:400.71px;font-size:13.87px;line-height:13.87px;color:#111;font-family:'DejaVu Sans',sans-serif;">∞</span>
<span class="t" style="left:1435.77px;top:447.31px;font-size:10.5px;line-height:10.5px;color:#111;font-family:'DejaVu Serif',serif;font-style:italic;">n</span>
<span class="t" style="left:1442.30px;top:447.31px;font-size:10.5px;line-height:10.5px;color:#111;font-family:'DejaVu Serif',serif;">=</span>
<span class="t" style="left:1450.34px;top:447.31px;font-size:10.5px;line-height:10.5px;color:#111;font-family:'DejaVu Serif',serif;">1</span>
<span class="t" style="left:1460.73px;top:412.99px;font-size:30.44px;line-height:30.44px;color:#111;font-family:'Liberation Serif',serif;transform-origin:1.37px 0;transform:scaleX(0.863);">(</span>
<span class="t" style="left:1469.29px;top:423.02px;font-size:14.5px;line-height:14.5px;color:#111;font-family:'DejaVu Serif',serif;font-style:italic;">a</span>
<span class="t" style="left:1478.17px;top:430.41px;font-size:10.5px;line-height:10.5px;color:#111;font-family:'DejaVu Serif',serif;font-style:italic;">n</span>
<span class="t" style="left:1488.23px;top:423.95px;font-size:13.4px;line-height:13.4px;color:#111;font-family:'DejaVu Serif',serif;letter-spacing:-0.50px;">cos</span>
<div style="left:1512.7px;top:431.3px;width:28.0px;height:1.1px;background:#111;"></div>
<span class="t" style="left:1512.58px;top:411.92px;font-size:14.5px;line-height:14.5px;color:#111;font-family:'DejaVu Serif',serif;font-style:italic;">n</span>
<span class="t" style="left:1521.74px;top:411.92px;font-size:14.5px;line-height:14.5px;color:#111;font-family:'DejaVu Serif',serif;font-style:italic;">π</span>
<span class="t" style="left:1531.33px;top:411.92px;font-size:14.5px;line-height:14.5px;color:#111;font-family:'DejaVu Serif',serif;font-style:italic;">x</span>
<span class="t" style="left:1522.92px;top:434.02px;font-size:14.5px;line-height:14.5px;color:#111;font-family:'DejaVu Serif',serif;font-style:italic;">L</span>
<span class="t" style="left:1544.08px;top:423.02px;font-size:14.5px;line-height:14.5px;color:#111;font-family:'DejaVu Serif',serif;">+</span>
<span class="t" style="left:1560.15px;top:423.02px;font-size:14.5px;line-height:14.5px;color:#111;font-family:'DejaVu Serif',serif;font-style:italic;">b</span>
<span class="t" style="left:1567.67px;top:430.41px;font-size:10.5px;line-height:10.5px;color:#111;font-family:'DejaVu Serif',serif;font-style:italic;">n</span>
<span class="t" style="left:1578.66px;top:423.95px;font-size:13.4px;line-height:13.4px;color:#111;font-family:'DejaVu Serif',serif;letter-spacing:0.25px;">sin</span>
<div style="left:1602.2px;top:431.3px;width:28.0px;height:1.1px;background:#111;"></div>
<span class="t" style="left:1602.18px;top:411.92px;font-size:14.5px;line-height:14.5px;color:#111;font-family:'DejaVu Serif',serif;font-style:italic;">n</span>
<span class="t" style="left:1611.35px;top:411.92px;font-size:14.5px;line-height:14.5px;color:#111;font-family:'DejaVu Serif',serif;font-style:italic;">π</span>
<span class="t" style="left:1620.93px;top:411.92px;font-size:14.5px;line-height:14.5px;color:#111;font-family:'DejaVu Serif',serif;font-style:italic;">x</span>
<span class="t" style="left:1612.12px;top:434.02px;font-size:14.5px;line-height:14.5px;color:#111;font-family:'DejaVu Serif',serif;font-style:italic;">L</span>
<span class="t" style="left:1629.69px;top:412.99px;font-size:30.44px;line-height:30.44px;color:#111;font-family:'Liberation Serif',serif;transform-origin:0.91px 0;transform:scaleX(0.846);">)</span>
<span class="t" style="left:1348.09px;top:511.52px;font-size:14.5px;line-height:14.5px;color:#111;font-family:'DejaVu Serif',serif;font-style:italic;">a</span>
<span class="t" style="left:1356.97px;top:509.41px;font-size:10.5px;line-height:10.5px;color:#111;font-family:'DejaVu Serif',serif;">2</span>
<span class="t" style="left:1367.68px;top:511.52px;font-size:14.5px;line-height:14.5px;color:#111;font-family:'DejaVu Serif',serif;">+</span>
<span class="t" style="left:1384.15px;top:511.52px;font-size:14.5px;line-height:14.5px;color:#111;font-family:'DejaVu Serif',serif;font-style:italic;">b</span>
<span class="t" style="left:1392.67px;top:509.41px;font-size:10.5px;line-height:10.5px;color:#111;font-family:'DejaVu Serif',serif;">2</span>
<span class="t" style="left:1402.78px;top:511.52px;font-size:14.5px;line-height:14.5px;color:#111;font-family:'DejaVu Serif',serif;">=</span>
<span class="t" style="left:1421.05px;top:511.52px;font-size:14.5px;line-height:14.5px;color:#111;font-family:'DejaVu Serif',serif;font-style:italic;">c</span>
<span class="t" style="left:1429.17px;top:509.41px;font-size:10.5px;line-height:10.5px;color:#111;font-family:'DejaVu Serif',serif;">2</span>
<span class="t" style="left:1347.94px;top:634.82px;font-size:14.5px;line-height:14.5px;color:#111;font-family:'DejaVu Serif',serif;">(</span>
<span class="t" style="left:1354.36px;top:634.82px;font-size:14.5px;line-height:14.5px;color:#111;font-family:'DejaVu Serif',serif;">1</span>
<span class="t" style="left:1366.28px;top:634.82px;font-size:14.5px;line-height:14.5px;color:#111;font-family:'DejaVu Serif',serif;">+</span>
<span class="t" style="left:1382.83px;top:634.82px;font-size:14.5px;line-height:14.5px;color:#111;font-family:'DejaVu Serif',serif;font-style:italic;">x</span>
<span class="t" style="left:1391.58px;top:634.82px;font-size:14.5px;line-height:14.5px;color:#111;font-family:'DejaVu Serif',serif;">)</span>
<span class="t" style="left:1398.07px;top:632.51px;font-size:10.5px;line-height:10.5px;color:#111;font-family:'DejaVu Serif',serif;font-style:italic;">n</span>
<span class="t" style="left:1410.08px;top:634.82px;font-size:14.5px;line-height:14.5px;color:#111;font-family:'DejaVu Serif',serif;">=</span>
<span class="t" style="left:1426.36px;top:634.82px;font-size:14.5px;line-height:14.5px;color:#111;font-family:'DejaVu Serif',serif;">1</span>
<span class="t" style="left:1438.98px;top:634.82px;font-size:14.5px;line-height:14.5px;color:#111;font-family:'DejaVu Serif',serif;">+</span>
<div style="left:1454.8px;top:642.5px;width:18.100000000000136px;height:1.1px;background:#111;"></div>
<span class="t" style="left:1454.48px;top:622.42px;font-size:14.5px;line-height:14.5px;color:#111;font-family:'DejaVu Serif',serif;font-style:italic;">n</span>
<span class="t" style="left:1464.03px;top:622.42px;font-size:14.5px;line-height:14.5px;color:#111;font-family:'DejaVu Serif',serif;font-style:italic;">x</span>
<span class="t" style="left:1456.66px;top:645.62px;font-size:14.5px;line-height:14.5px;color:#111;font-family:'DejaVu Serif',serif;">1</span>
<span class="t" style="left:1464.64px;top:645.62px;font-size:14.5px;line-height:14.5px;color:#111;font-family:'DejaVu Serif',serif;">!</span>
<span class="t" style="left:1475.88px;top:634.82px;font-size:14.5px;line-height:14.5px;color:#111;font-family:'DejaVu Serif',serif;">+</span>
<div style="left:1491.7px;top:642.5px;width:77.09999999999991px;height:1.1px;background:#111;"></div>
<span class="t" style="left:1491.58px;top:622.42px;font-size:14.5px;line-height:14.5px;color:#111;font-family:'DejaVu Serif',serif;font-style:italic;">n</span>
<span class="t" style="left:1501.44px;top:622.42px;font-size:14.5px;line-height:14.5px;color:#111;font-family:'DejaVu Serif',serif;">(</span>
<span class="t" style="left:1507.98px;top:622.42px;font-size:14.5px;line-height:14.5px;color:#111;font-family:'DejaVu Serif',serif;font-style:italic;">n</span>
<span class="t" style="left:1521.18px;top:622.42px;font-size:14.5px;line-height:14.5px;color:#111;font-family:'DejaVu Serif',serif;">−</span>
<span class="t" style="left:1536.56px;top:622.42px;font-size:14.5px;line-height:14.5px;color:#111;font-family:'DejaVu Serif',serif;">1</span>
<span class="t" style="left:1545.48px;top:622.42px;font-size:14.5px;line-height:14.5px;color:#111;font-family:'DejaVu Serif',serif;">)</span>
<span class="t" style="left:1552.83px;top:622.42px;font-size:14.5px;line-height:14.5px;color:#111;font-family:'DejaVu Serif',serif;font-style:italic;">x</span>
<span class="t" style="left:1562.27px;top:620.31px;font-size:10.5px;line-height:10.5px;color:#111;font-family:'DejaVu Serif',serif;">2</span>
<span class="t" style="left:1523.58px;top:645.62px;font-size:14.5px;line-height:14.5px;color:#111;font-family:'DejaVu Serif',serif;">2</span>
<span class="t" style="left:1531.84px;top:645.62px;font-size:14.5px;line-height:14.5px;color:#111;font-family:'DejaVu Serif',serif;">!</span>
<span class="t" style="left:1572.38px;top:634.82px;font-size:14.5px;line-height:14.5px;color:#111;font-family:'DejaVu Serif',serif;">+</span>
<span class="t" style="left:1587.23px;top:634.82px;font-size:14.5px;line-height:14.5px;color:#111;font-family:'DejaVu Serif',serif;">⋯</span>
<span class="t" style="left:1367.4px;top:704.1px;font-size:12px;line-height:18px;color:#fff;"><span style="font-size:13px;letter-spacing:-0.05px">Office.com</span><span style="font-size:15px"> </span>中的其他公式(<span style="text-decoration:underline;text-underline-offset:1.5px;">M</span>)</span>
<span class="t" style="left:1367.4px;top:734.6px;font-size:12px;line-height:18px;color:#fff;">插入新公式(<span style="text-decoration:underline;text-underline-offset:1.5px;">I</span>)</span>
<span class="t" style="left:1367.4px;top:765.0px;font-size:12px;line-height:18px;color:#fff;">墨迹公式(<span style="text-decoration:underline;text-underline-offset:1.5px;">K</span>)</span>
<span class="t" style="left:1367.4px;top:795.2px;font-size:12px;line-height:18px;color:#8a8a8a;">将所选内容保存到公式库(<span style="text-decoration:underline;text-underline-offset:1.5px;">S</span>)...</span>
<svg class="i" style="left:1732px;top:706px;" width="9" height="12" viewBox="0 0 9 12"><path d="M1.6 1.2 L7.2 6 L1.6 10.8" fill="none" stroke="#fff" stroke-width="1.2"/></svg>
<svg class="i" style="left:1341px;top:704px;" width="18" height="18" viewBox="0 0 18 18"><circle cx="8.2" cy="8.2" r="7" fill="none" stroke="#d6d6d6" stroke-width="1.1"/><ellipse cx="8.2" cy="8.2" rx="3.2" ry="7" fill="none" stroke="#d6d6d6" stroke-width="1"/><path d="M1.4 6 H15 M1.4 10.6 H9" stroke="#d6d6d6" stroke-width="1"/><rect x="8" y="9.6" width="10" height="8.4" fill="#4d4d4d"/><path d="M8.6 13.8 H16.6 M13.6 10.6 L16.8 13.8 L13.6 17" fill="none" stroke="#3a96dd" stroke-width="1.3"/></svg>
<svg class="i" style="left:1342px;top:735px;" width="17" height="15" viewBox="0 0 17 15"><g transform="translate(1.60 0.00)"><path d="M0 0.5 H13.6 M3 0.5 V12.6 M1.6 12.6 H3 M10.3 0.5 V10.4 Q10.3 12.7 13.3 12.5" fill="none" stroke="#d6d6d6" stroke-width="1.1"/></g></svg>
<svg class="i" style="left:1341.5px;top:765px;" width="18" height="16" viewBox="0 0 18 16"><rect x="1.5" y="1.5" width="15" height="13" fill="none" stroke="#d6d6d6" stroke-width="1"/><path d="M3.2 7.8 L4.8 7.2 L6.6 11.6 L8.4 4.5 H13.8" fill="none" stroke="#3a96dd" stroke-width="1.2"/><path d="M5.8 16 L9.6 10.2 L16.6 5.4" fill="none" stroke="#4d4d4d" stroke-width="4.4"/><path d="M16 6.2 L12.4 9.6" stroke="#c9c9c9" stroke-width="2.4" stroke-linecap="round"/><path d="M12.2 10 L7.6 14.6" stroke="#e0474c" stroke-width="2.4" stroke-linecap="round"/></svg>
<svg class="i" style="left:1342px;top:795px;" width="16" height="16" viewBox="0 0 16 16"><path d="M1 1 H12 L15 4 V15 H1 Z M4 1 V5.6 H11 V1 M4 15 V9.4 H12 V15" fill="none" stroke="#8a8a8a" stroke-width="1.1"/></svg>
<span class="t" style="left:778.20px;top:459.62px;font-size:22.3px;line-height:22.3px;color:#000;font-family:'Liberation Serif',serif;letter-spacing:0.04px;">\frac{c}{a</span>
<span class="t" style="left:877.07px;top:457.78px;font-size:24.5px;line-height:24.5px;color:#000;font-family:'Liberation Serif',serif;">+</span>
<span class="t" style="left:899.80px;top:459.62px;font-size:22.3px;line-height:22.3px;color:#000;font-family:'Liberation Serif',serif;letter-spacing:-1.15px;">b}</span>
<span class="t" style="left:460.23px;top:411.36px;font-size:22.6px;line-height:22.6px;color:#000;font-family:'Noto Sans CJK SC',sans-serif;font-weight:300;letter-spacing:-0.08px;">LaTex</span>
<span class="t" style="left:523.73px;top:412.16px;font-size:21.3px;line-height:21.3px;color:#000;font-family:'Noto Sans CJK SC',sans-serif;font-weight:300;letter-spacing:1.17px;">语法公式</span>
<div class="badge" style="left:247.2px;top:37px;width:40px;height:40px;"></div>
<span class="t" style="left:260.12px;top:45.38px;font-size:25.79px;line-height:25.79px;color:#fff;font-family:NanumGothic,'WenQuanYi Zen Hei',sans-serif;font-weight:bold;">1</span>
<div class="badge" style="left:1297.9px;top:67px;width:40px;height:40px;"></div>
<span class="t" style="left:1310.13px;top:73.64px;font-size:28.0px;line-height:28.0px;color:#fff;font-family:'Liberation Sans',sans-serif;">2</span>
<div class="badge" style="left:1297.7px;top:715.8px;width:40px;height:40px;"></div>
<span class="t" style="left:1310.11px;top:722.5px;font-size:27.61px;line-height:27.61px;color:#fff;font-family:'Liberation Sans',sans-serif;">3</span>
<div class="badge" style="left:842.2px;top:228.1px;width:40px;height:40px;"></div>
<span class="t" style="left:854.39px;top:234.4px;font-size:28.41px;line-height:28.41px;color:#fff;font-family:'Liberation Sans',sans-serif;">4</span>
<div class="badge" style="left:81.2px;top:290.8px;width:40px;height:40px;"></div>
<span class="t" style="left:93.43px;top:297.16px;font-size:28.0px;line-height:28.0px;color:#fff;font-family:'Liberation Sans',sans-serif;">5</span>
</div></body></html>
